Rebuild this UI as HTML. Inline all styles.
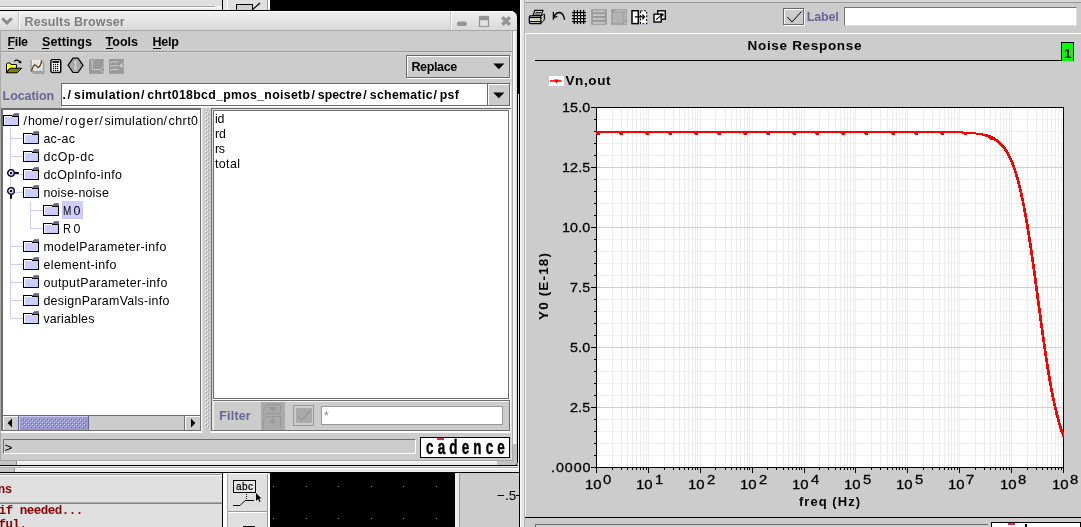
<!DOCTYPE html>
<html><head><meta charset="utf-8"><title>Results Browser</title>
<style>
html,body{margin:0;padding:0;}
body{width:1081px;height:527px;overflow:hidden;position:relative;background:#ccc;font-family:"Liberation Sans",sans-serif;}
#root{position:absolute;left:0;top:0;width:1081px;height:527px;overflow:hidden;will-change:transform;}
#root div,#root span.t,#root svg{position:absolute;}
span.t{white-space:pre;display:block;}
</style></head><body><div id="root">
<div style="left:0px;top:0px;width:222px;height:10px;background:#e0e0e0;"></div>
<div style="left:0px;top:6px;width:215px;height:1px;background:#a8a8a8;"></div>
<div style="left:0px;top:7px;width:215px;height:1px;background:#fcfcfc;"></div>
<div style="left:0px;top:8px;width:215px;height:2px;background:#ececec;"></div>
<div style="left:215px;top:6px;width:1px;height:4px;background:#f8f8f8;"></div>
<div style="left:216px;top:6px;width:1px;height:4px;background:#e0e0e0;"></div>
<div style="left:217px;top:6px;width:5px;height:4px;background:#ececec;"></div>
<div style="left:217px;top:6px;width:5px;height:1px;background:#fcfcfc;"></div>
<div style="left:217px;top:6px;width:1px;height:4px;background:#fcfcfc;"></div>
<div style="left:222px;top:0px;width:1px;height:10px;background:#000000;"></div>
<div style="left:223px;top:0px;width:4px;height:10px;background:#e8e8e8;"></div>
<div style="left:227px;top:0px;width:1px;height:10px;background:#ffffff;"></div>
<div style="left:228px;top:0px;width:39px;height:10px;background:#e0e0e0;"></div>
<div style="left:267px;top:0px;width:1px;height:10px;background:#999999;"></div>
<div style="left:268px;top:0px;width:2px;height:10px;background:#ffffff;"></div>
<div style="left:270px;top:0px;width:250px;height:10px;background:#000000;"></div>
<svg style="left:228px;top:0px" width="40" height="10" viewBox="0 0 40 10" ><rect x="8.5" y="4.5" width="16" height="8" fill="#d0d0d0" stroke="#000"/><path d="M24 10 L32 3" stroke="#000" stroke-width="1.3"/></svg>
<div style="left:0px;top:10px;width:517px;height:1px;background:#000000;"></div>
<div style="left:0px;top:465px;width:519px;height:62px;background:#e0e0e0;"></div>
<div style="left:0px;top:465px;width:519px;height:1px;background:#000000;"></div>
<div style="left:0px;top:466px;width:519px;height:1px;background:#e8e8e8;"></div>
<div style="left:0px;top:467px;width:519px;height:1px;background:#aaaaaa;"></div>
<div style="left:0px;top:468px;width:519px;height:4px;background:#ececec;"></div>
<div style="left:0px;top:468px;width:519px;height:1px;background:#ffffff;"></div>
<div style="left:0px;top:468px;width:14px;height:4px;background:#c4c4c4;"></div>
<div style="left:14px;top:468px;width:1px;height:4px;background:#8a8a8a;"></div>
<div style="left:0px;top:472px;width:519px;height:1px;background:#000000;"></div>
<div style="left:0px;top:473px;width:222px;height:1px;background:#e0e0e0;"></div>
<div style="left:0px;top:474px;width:222px;height:53px;background:#e0e0e0;"></div>
<div style="left:0px;top:474px;width:222px;height:1px;background:#999;"></div>
<div style="left:0px;top:475px;width:222px;height:1px;background:#fafafa;"></div>
<div style="left:0px;top:502px;width:222px;height:1px;background:#a8a8a8;"></div>
<div style="left:0px;top:503px;width:222px;height:1px;background:#858585;"></div>
<span class="t " style="left:-9.30px;top:483.75px;font:bold 12.5px/12.5px 'Liberation Mono',monospace;color:#8b0000;letter-spacing:-0.5px;">ons</span>
<span class="t " style="left:-1.20px;top:504.75px;font:bold 12.5px/12.5px 'Liberation Mono',monospace;color:#8b0000;letter-spacing:-0.5px;">if needed...</span>
<span class="t " style="left:-8.50px;top:518.75px;font:bold 12.5px/12.5px 'Liberation Mono',monospace;color:#8b0000;letter-spacing:-0.5px;">sful.</span>
<div style="left:222px;top:473px;width:1px;height:54px;background:#000000;"></div>
<div style="left:223px;top:473px;width:4px;height:54px;background:#ffffff;"></div>
<div style="left:227px;top:473px;width:1px;height:54px;background:#aaa;"></div>
<div style="left:228px;top:474px;width:39px;height:53px;background:#e0e0e0;"></div>
<div style="left:228px;top:473px;width:39px;height:1px;background:#ffffff;"></div>
<div style="left:228px;top:511px;width:39px;height:1px;background:#999;"></div>
<div style="left:228px;top:512px;width:39px;height:1px;background:#ffffff;"></div>
<div style="left:267px;top:474px;width:1px;height:53px;background:#999;"></div>
<div style="left:268px;top:474px;width:2px;height:53px;background:#ffffff;"></div>
<svg style="left:228px;top:474px" width="40" height="53" viewBox="0 0 40 53" ><rect x="5.5" y="6.5" width="22" height="12" fill="#e8e8e8" stroke="#000"/>
<text x="8" y="16" font-family="Liberation Sans,sans-serif" font-size="10" fill="#000" stroke="#000" stroke-width="0.25" textLength="17">abc</text>
<path d="M18.5 20 V25" stroke="#000" stroke-dasharray="1 1"/>
<path d="M5 31.5 H12 L17 26.5 H26" stroke="#000" fill="none"/>
<path d="M28 19 L28 27 L30 25 L31.5 28 L32.5 27.5 L31.3 24.6 L33.5 24.5 Z" fill="#000"/>
<rect x="15" y="52" width="12" height="1" fill="#000"/></svg>
<div style="left:270px;top:473px;width:185px;height:54px;background:#000000;"></div>
<svg style="left:270px;top:474px" width="185" height="53" viewBox="0 0 185 53" shape-rendering="crispEdges"><rect x="3.0" y="12" width="1" height="1" fill="#8c8cb4"/><rect x="3.0" y="44" width="1" height="1" fill="#8c8cb4"/><rect x="35.5" y="12" width="1" height="1" fill="#8c8cb4"/><rect x="35.5" y="44" width="1" height="1" fill="#8c8cb4"/><rect x="68.0" y="12" width="1" height="1" fill="#8c8cb4"/><rect x="68.0" y="44" width="1" height="1" fill="#8c8cb4"/><rect x="100.5" y="12" width="1" height="1" fill="#8c8cb4"/><rect x="100.5" y="44" width="1" height="1" fill="#8c8cb4"/><rect x="133.0" y="12" width="1" height="1" fill="#8c8cb4"/><rect x="133.0" y="44" width="1" height="1" fill="#8c8cb4"/><rect x="165.5" y="12" width="1" height="1" fill="#8c8cb4"/><rect x="165.5" y="44" width="1" height="1" fill="#8c8cb4"/></svg>
<div style="left:455px;top:473px;width:4px;height:54px;background:#ececec;"></div>
<div style="left:459px;top:473px;width:1px;height:54px;background:#999;"></div>
<div style="left:460px;top:473px;width:59px;height:54px;background:#cccccc;"></div>
<span class="t " style="left:497.00px;top:488.75px;font:13.5px/13.5px 'Liberation Sans',sans-serif;color:#000000;">−.5</span>
<div style="left:516px;top:495px;width:3px;height:1px;background:#000000;"></div>
<div style="left:519px;top:0px;width:1px;height:527px;background:#000000;"></div>
<div style="left:520px;top:0px;width:1px;height:527px;background:#ffffff;"></div>
<div style="left:521px;top:0px;width:3px;height:527px;background:#e6e6e6;"></div>
<div style="left:524px;top:0px;width:1px;height:527px;background:#b4b4b4;"></div>
<div style="left:517px;top:0px;width:3px;height:460px;background:#000000;"></div>
<div style="left:-6px;top:440px;width:524px;height:26px;background:#000;border-radius:5px;"></div>
<div style="left:518px;top:94px;width:1px;height:378px;background:#f4f4f4;"></div>
<div style="left:505px;top:10px;width:14px;height:12px;background:#000000;"></div>
<div style="left:0;top:11px;width:517px;height:20px;background:linear-gradient(#f0f0f0,#e5e5e5 50%,#d7d7d7);border-top-right-radius:6px;"></div>
<div style="left:19px;top:11px;width:494px;height:1px;background:#fafafa;"></div>
<div style="left:0px;top:30px;width:517px;height:1px;background:#a8a8a8;"></div>
<div style="left:18px;top:11px;width:1px;height:19px;background:#c8c8c8;"></div>
<div style="left:19px;top:11px;width:1px;height:19px;background:#f8f8f8;"></div>
<div style="left:450px;top:11px;width:1px;height:19px;background:#c8c8c8;"></div>
<div style="left:451px;top:11px;width:1px;height:19px;background:#f8f8f8;"></div>
<svg style="left:0px;top:10px" width="20" height="21" viewBox="0 0 20 21" ><path d="M2.2 8.2 L7 13 L11.8 8.2" stroke="#8a8a8a" stroke-width="3" fill="none"/></svg>
<span class="t " style="left:24.60px;top:15.75px;font:bold 12.5px/12.5px 'Liberation Sans',sans-serif;color:#7e7e7e;letter-spacing:0.097px;">Results Browser</span>
<svg style="left:452px;top:10px" width="65" height="21" viewBox="0 0 65 21" ><rect x="4.8" y="11.4" width="10.2" height="4.6" rx="2.3" fill="#969696"/>
<rect x="27.5" y="6.5" width="9" height="10" fill="none" stroke="#969696" stroke-width="1.2"/><rect x="27" y="6" width="10" height="4.3" fill="#969696"/>
<path d="M50.3 7.3 L57.7 14.7 M57.7 7.3 L50.3 14.7" stroke="#969696" stroke-width="3.7" stroke-linecap="butt"/></svg>
<div style="left:0px;top:31px;width:517px;height:434px;background:#cccccc;border-bottom-right-radius:4px;"></div>
<div style="left:0px;top:31px;width:1px;height:434px;background:#aaaaaa;"></div>
<div style="left:513px;top:31px;width:4px;height:430px;background:#fff;background:linear-gradient(to right,#fcfcfc,#f0f0f0 50%,#d8d8d8);"></div>
<div style="left:512px;top:31px;width:1px;height:430px;background:#a8a8a8;"></div>
<div style="left:511px;top:31px;width:1px;height:430px;background:#dcdcdc;"></div>
<div style="left:0px;top:461px;width:517px;height:4px;background:#ececec;border-bottom-right-radius:4px;"></div>
<div style="left:0px;top:461px;width:514px;height:1px;background:#ffffff;"></div>
<div style="left:0px;top:461px;width:16px;height:4px;background:#c4c4c4;"></div>
<div style="left:16px;top:461px;width:1px;height:4px;background:#8a8a8a;"></div>
<div style="left:497px;top:461px;width:20px;height:4px;background:#c0c0c0;border-bottom-right-radius:4px;"></div>
<div style="left:513px;top:444px;width:4px;height:19px;background:#c0c0c0;border-bottom-right-radius:4px;"></div>
<div style="left:1px;top:460px;width:512px;height:1px;background:#a6a6a6;"></div>
<span class="t " style="left:7.50px;top:35.75px;font:bold 12.5px/12.5px 'Liberation Sans',sans-serif;color:#000000;letter-spacing:-0.344px;">File</span>
<span class="t " style="left:42.00px;top:35.75px;font:bold 12.5px/12.5px 'Liberation Sans',sans-serif;color:#000000;letter-spacing:0.099px;">Settings</span>
<span class="t " style="left:105.50px;top:35.75px;font:bold 12.5px/12.5px 'Liberation Sans',sans-serif;color:#000000;letter-spacing:0.025px;">Tools</span>
<span class="t " style="left:152.50px;top:35.75px;font:bold 12.5px/12.5px 'Liberation Sans',sans-serif;color:#000000;letter-spacing:-0.195px;">Help</span>
<div style="left:8px;top:48px;width:6px;height:1px;background:#000000;"></div>
<div style="left:42px;top:48px;width:7px;height:1px;background:#000000;"></div>
<div style="left:106px;top:48px;width:7px;height:1px;background:#000000;"></div>
<div style="left:153px;top:48px;width:8px;height:1px;background:#000000;"></div>
<div style="left:1px;top:51px;width:511px;height:1px;background:#999;"></div>
<div style="left:1px;top:52px;width:511px;height:1px;background:#d8d8d8;"></div>
<div style="left:406px;top:55px;width:104px;height:23px;background:#cccccc;box-sizing:border-box;border:1px solid #6a6a6a;"></div>
<div style="left:407px;top:56px;width:102px;height:1px;background:#ffffff;"></div>
<div style="left:407px;top:56px;width:1px;height:21px;background:#ffffff;"></div>
<div style="left:407px;top:78px;width:104px;height:1px;background:#ffffff;"></div>
<div style="left:510px;top:56px;width:1px;height:23px;background:#ffffff;"></div>
<span class="t " style="left:411.40px;top:60.75px;font:bold 12.5px/12.5px 'Liberation Sans',sans-serif;color:#000000;letter-spacing:-0.357px;">Replace</span>
<svg style="left:492px;top:62px" width="14" height="8" viewBox="0 0 14 8" ><path d="M1.2 1.6 H12.4 L6.8 7.3 Z" fill="#000"/></svg>
<span class="t " style="left:2.60px;top:89.75px;font:bold 12.5px/12.5px 'Liberation Sans',sans-serif;color:#666699;letter-spacing:-0.082px;">Location</span>
<div style="left:61px;top:83px;width:449px;height:23px;background:#ffffff;box-sizing:border-box;border:1px solid #6a6a6a;"></div>
<div style="left:488px;top:84px;width:21px;height:21px;background:#cccccc;"></div>
<div style="left:487px;top:84px;width:1px;height:21px;background:#6a6a6a;"></div>
<div style="left:488px;top:84px;width:1px;height:21px;background:#ffffff;"></div>
<div style="left:488px;top:84px;width:21px;height:1px;background:#ffffff;"></div>
<div style="left:62px;top:106px;width:449px;height:1px;background:#ffffff;"></div>
<div style="left:510px;top:84px;width:1px;height:23px;background:#ffffff;"></div>
<div style="left:62px;top:107px;width:449px;height:1px;background:#eeeeee;"></div>
<svg style="left:492px;top:91px" width="14" height="8" viewBox="0 0 14 8" ><path d="M1.2 1.6 H12.4 L6.8 7.3 Z" fill="#000"/></svg>
<span class="t " style="left:62.40px;top:88.85px;font:bold 12.3px/12.3px 'Liberation Sans',sans-serif;color:#000000;letter-spacing:1.666px;">./</span>
<span class="t " style="left:74.10px;top:88.85px;font:bold 12.3px/12.3px 'Liberation Sans',sans-serif;color:#000000;letter-spacing:0.500px;">simulation</span>
<span class="t " style="left:140.90px;top:88.85px;font:bold 12.3px/12.3px 'Liberation Sans',sans-serif;color:#000000;">/</span>
<span class="t " style="left:147.30px;top:88.85px;font:bold 12.3px/12.3px 'Liberation Sans',sans-serif;color:#000000;letter-spacing:0.312px;">chrt018bcd_pmos_noisetb</span>
<span class="t " style="left:311.40px;top:88.85px;font:bold 12.3px/12.3px 'Liberation Sans',sans-serif;color:#000000;">/</span>
<span class="t " style="left:317.80px;top:88.85px;font:bold 12.3px/12.3px 'Liberation Sans',sans-serif;color:#000000;letter-spacing:0.041px;">spectre</span>
<span class="t " style="left:363.20px;top:88.85px;font:bold 12.3px/12.3px 'Liberation Sans',sans-serif;color:#000000;">/</span>
<span class="t " style="left:369.80px;top:88.85px;font:bold 12.3px/12.3px 'Liberation Sans',sans-serif;color:#000000;letter-spacing:0.317px;">schematic</span>
<span class="t " style="left:433.40px;top:88.85px;font:bold 12.3px/12.3px 'Liberation Sans',sans-serif;color:#000000;">/</span>
<span class="t " style="left:439.80px;top:88.85px;font:bold 12.3px/12.3px 'Liberation Sans',sans-serif;color:#000000;letter-spacing:0.276px;">psf</span>
<div style="left:1px;top:108px;width:200px;height:323px;background:#ffffff;box-sizing:border-box;border:2px solid #6e6e6e;border-right:1px solid #6e6e6e;border-bottom:1px solid #6e6e6e"></div>
<div style="left:201px;top:109px;width:1px;height:324px;background:#ffffff;"></div>
<div style="left:1px;top:431px;width:201px;height:1px;background:#ffffff;"></div>
<div style="left:1px;top:432px;width:201px;height:1px;background:#ffffff;"></div>
<div style="left:202px;top:108px;width:1px;height:325px;background:#dcdcdc;"></div>
<div style="left:10px;top:127px;width:1px;height:192px;background:#ccccff;"></div>
<div style="left:11px;top:138px;width:12px;height:1px;background:#ccccff;"></div>
<div style="left:11px;top:156px;width:12px;height:1px;background:#ccccff;"></div>
<div style="left:11px;top:174px;width:12px;height:1px;background:#ccccff;"></div>
<div style="left:11px;top:192px;width:12px;height:1px;background:#ccccff;"></div>
<div style="left:11px;top:246px;width:12px;height:1px;background:#ccccff;"></div>
<div style="left:11px;top:264px;width:12px;height:1px;background:#ccccff;"></div>
<div style="left:11px;top:282px;width:12px;height:1px;background:#ccccff;"></div>
<div style="left:11px;top:300px;width:12px;height:1px;background:#ccccff;"></div>
<div style="left:11px;top:318px;width:12px;height:1px;background:#ccccff;"></div>
<div style="left:30px;top:201px;width:1px;height:28px;background:#ccccff;"></div>
<div style="left:31px;top:210px;width:12px;height:1px;background:#ccccff;"></div>
<div style="left:31px;top:228px;width:12px;height:1px;background:#ccccff;"></div>
<div style="left:62px;top:201px;width:21px;height:18px;background:#ccccff;"></div>
<svg style="left:3px;top:112px" width="17" height="15" viewBox="0 0 17 15" shape-rendering="crispEdges"><rect x="1" y="4" width="14" height="9" fill="#ccccff"/><path d="M0.5 3 V14 M0 13.5 H16 M15.5 4 V14 M0 3.5 H9" stroke="#000" fill="none"/><path d="M1.5 13 V4.5 H9" fill="none" stroke="#fff"/><path d="M9 4 V3 L11 1 H16 V4 Z" fill="#666699"/><path d="M9 4.5 H15" stroke="#000"/><path d="M11 1.5 H16" stroke="#7c7cac"/></svg>
<span class="t " style="left:23.50px;top:114.80px;font:12.4px/12.4px 'Liberation Sans',sans-serif;color:#000000;">/</span>
<span class="t " style="left:28.10px;top:114.80px;font:12.4px/12.4px 'Liberation Sans',sans-serif;color:#000000;letter-spacing:0.095px;">home</span>
<span class="t " style="left:59.70px;top:114.80px;font:12.4px/12.4px 'Liberation Sans',sans-serif;color:#000000;">/</span>
<span class="t " style="left:65.00px;top:114.80px;font:12.4px/12.4px 'Liberation Sans',sans-serif;color:#000000;letter-spacing:1.189px;">roger</span>
<span class="t " style="left:99.30px;top:114.80px;font:12.4px/12.4px 'Liberation Sans',sans-serif;color:#000000;">/</span>
<span class="t " style="left:104.60px;top:114.80px;font:12.4px/12.4px 'Liberation Sans',sans-serif;color:#000000;letter-spacing:0.331px;">simulation</span>
<span class="t " style="left:163.60px;top:114.80px;font:12.4px/12.4px 'Liberation Sans',sans-serif;color:#000000;">/</span>
<span class="t " style="left:168.50px;top:114.80px;font:12.4px/12.4px 'Liberation Sans',sans-serif;color:#000000;letter-spacing:0.484px;">chrt0</span>
<svg style="left:23px;top:130px" width="17" height="15" viewBox="0 0 17 15" shape-rendering="crispEdges"><rect x="1" y="4" width="14" height="9" fill="#ccccff"/><path d="M0.5 3 V14 M0 13.5 H16 M15.5 4 V14 M0 3.5 H9" stroke="#000" fill="none"/><path d="M1.5 13 V4.5 H9" fill="none" stroke="#fff"/><path d="M9 4 V3 L11 1 H16 V4 Z" fill="#666699"/><path d="M9 4.5 H15" stroke="#000"/><path d="M11 1.5 H16" stroke="#7c7cac"/></svg>
<span class="t " style="left:43.40px;top:132.80px;font:12.4px/12.4px 'Liberation Sans',sans-serif;color:#000000;letter-spacing:0.295px;">ac-ac</span>
<svg style="left:23px;top:148px" width="17" height="15" viewBox="0 0 17 15" shape-rendering="crispEdges"><rect x="1" y="4" width="14" height="9" fill="#ccccff"/><path d="M0.5 3 V14 M0 13.5 H16 M15.5 4 V14 M0 3.5 H9" stroke="#000" fill="none"/><path d="M1.5 13 V4.5 H9" fill="none" stroke="#fff"/><path d="M9 4 V3 L11 1 H16 V4 Z" fill="#666699"/><path d="M9 4.5 H15" stroke="#000"/><path d="M11 1.5 H16" stroke="#7c7cac"/></svg>
<span class="t " style="left:43.40px;top:150.80px;font:12.4px/12.4px 'Liberation Sans',sans-serif;color:#000000;letter-spacing:0.607px;">dcOp-dc</span>
<svg style="left:23px;top:166px" width="17" height="15" viewBox="0 0 17 15" shape-rendering="crispEdges"><rect x="1" y="4" width="14" height="9" fill="#ccccff"/><path d="M0.5 3 V14 M0 13.5 H16 M15.5 4 V14 M0 3.5 H9" stroke="#000" fill="none"/><path d="M1.5 13 V4.5 H9" fill="none" stroke="#fff"/><path d="M9 4 V3 L11 1 H16 V4 Z" fill="#666699"/><path d="M9 4.5 H15" stroke="#000"/><path d="M11 1.5 H16" stroke="#7c7cac"/></svg>
<span class="t " style="left:43.40px;top:168.80px;font:12.4px/12.4px 'Liberation Sans',sans-serif;color:#000000;letter-spacing:0.339px;">dcOpInfo-info</span>
<svg style="left:23px;top:184px" width="17" height="15" viewBox="0 0 17 15" shape-rendering="crispEdges"><rect x="1" y="4" width="14" height="9" fill="#ccccff"/><path d="M0.5 3 V14 M0 13.5 H16 M15.5 4 V14 M0 3.5 H9" stroke="#000" fill="none"/><path d="M1.5 13 V4.5 H9" fill="none" stroke="#fff"/><path d="M9 4 V3 L11 1 H16 V4 Z" fill="#666699"/><path d="M9 4.5 H15" stroke="#000"/><path d="M11 1.5 H16" stroke="#7c7cac"/></svg>
<span class="t " style="left:43.40px;top:186.80px;font:12.4px/12.4px 'Liberation Sans',sans-serif;color:#000000;letter-spacing:0.209px;">noise-noise</span>
<svg style="left:43px;top:202px" width="17" height="15" viewBox="0 0 17 15" shape-rendering="crispEdges"><rect x="1" y="4" width="14" height="9" fill="#ccccff"/><path d="M0.5 3 V14 M0 13.5 H16 M15.5 4 V14 M0 3.5 H9" stroke="#000" fill="none"/><path d="M1.5 13 V4.5 H9" fill="none" stroke="#fff"/><path d="M9 4 V3 L11 1 H16 V4 Z" fill="#666699"/><path d="M9 4.5 H15" stroke="#000"/><path d="M11 1.5 H16" stroke="#7c7cac"/></svg>
<span class="t " style="left:63.40px;top:204.80px;font:12.4px/12.4px 'Liberation Sans',sans-serif;color:#000000;transform:scaleX(0.8);transform-origin:0 0;">M</span>
<span class="t " style="left:73.50px;top:204.80px;font:12.4px/12.4px 'Liberation Sans',sans-serif;color:#000000;">0</span>
<svg style="left:43px;top:220px" width="17" height="15" viewBox="0 0 17 15" shape-rendering="crispEdges"><rect x="1" y="4" width="14" height="9" fill="#ccccff"/><path d="M0.5 3 V14 M0 13.5 H16 M15.5 4 V14 M0 3.5 H9" stroke="#000" fill="none"/><path d="M1.5 13 V4.5 H9" fill="none" stroke="#fff"/><path d="M9 4 V3 L11 1 H16 V4 Z" fill="#666699"/><path d="M9 4.5 H15" stroke="#000"/><path d="M11 1.5 H16" stroke="#7c7cac"/></svg>
<span class="t " style="left:63.40px;top:222.80px;font:12.4px/12.4px 'Liberation Sans',sans-serif;color:#000000;transform:scaleX(0.9);transform-origin:0 0;">R</span>
<span class="t " style="left:73.50px;top:222.80px;font:12.4px/12.4px 'Liberation Sans',sans-serif;color:#000000;">0</span>
<svg style="left:23px;top:238px" width="17" height="15" viewBox="0 0 17 15" shape-rendering="crispEdges"><rect x="1" y="4" width="14" height="9" fill="#ccccff"/><path d="M0.5 3 V14 M0 13.5 H16 M15.5 4 V14 M0 3.5 H9" stroke="#000" fill="none"/><path d="M1.5 13 V4.5 H9" fill="none" stroke="#fff"/><path d="M9 4 V3 L11 1 H16 V4 Z" fill="#666699"/><path d="M9 4.5 H15" stroke="#000"/><path d="M11 1.5 H16" stroke="#7c7cac"/></svg>
<span class="t " style="left:43.40px;top:240.80px;font:12.4px/12.4px 'Liberation Sans',sans-serif;color:#000000;letter-spacing:0.401px;">modelParameter-info</span>
<svg style="left:23px;top:256px" width="17" height="15" viewBox="0 0 17 15" shape-rendering="crispEdges"><rect x="1" y="4" width="14" height="9" fill="#ccccff"/><path d="M0.5 3 V14 M0 13.5 H16 M15.5 4 V14 M0 3.5 H9" stroke="#000" fill="none"/><path d="M1.5 13 V4.5 H9" fill="none" stroke="#fff"/><path d="M9 4 V3 L11 1 H16 V4 Z" fill="#666699"/><path d="M9 4.5 H15" stroke="#000"/><path d="M11 1.5 H16" stroke="#7c7cac"/></svg>
<span class="t " style="left:43.40px;top:258.80px;font:12.4px/12.4px 'Liberation Sans',sans-serif;color:#000000;letter-spacing:0.434px;">element-info</span>
<svg style="left:23px;top:274px" width="17" height="15" viewBox="0 0 17 15" shape-rendering="crispEdges"><rect x="1" y="4" width="14" height="9" fill="#ccccff"/><path d="M0.5 3 V14 M0 13.5 H16 M15.5 4 V14 M0 3.5 H9" stroke="#000" fill="none"/><path d="M1.5 13 V4.5 H9" fill="none" stroke="#fff"/><path d="M9 4 V3 L11 1 H16 V4 Z" fill="#666699"/><path d="M9 4.5 H15" stroke="#000"/><path d="M11 1.5 H16" stroke="#7c7cac"/></svg>
<span class="t " style="left:43.40px;top:276.80px;font:12.4px/12.4px 'Liberation Sans',sans-serif;color:#000000;letter-spacing:0.396px;">outputParameter-info</span>
<svg style="left:23px;top:292px" width="17" height="15" viewBox="0 0 17 15" shape-rendering="crispEdges"><rect x="1" y="4" width="14" height="9" fill="#ccccff"/><path d="M0.5 3 V14 M0 13.5 H16 M15.5 4 V14 M0 3.5 H9" stroke="#000" fill="none"/><path d="M1.5 13 V4.5 H9" fill="none" stroke="#fff"/><path d="M9 4 V3 L11 1 H16 V4 Z" fill="#666699"/><path d="M9 4.5 H15" stroke="#000"/><path d="M11 1.5 H16" stroke="#7c7cac"/></svg>
<span class="t " style="left:43.40px;top:294.80px;font:12.4px/12.4px 'Liberation Sans',sans-serif;color:#000000;letter-spacing:0.296px;">designParamVals-info</span>
<svg style="left:23px;top:310px" width="17" height="15" viewBox="0 0 17 15" shape-rendering="crispEdges"><rect x="1" y="4" width="14" height="9" fill="#ccccff"/><path d="M0.5 3 V14 M0 13.5 H16 M15.5 4 V14 M0 3.5 H9" stroke="#000" fill="none"/><path d="M1.5 13 V4.5 H9" fill="none" stroke="#fff"/><path d="M9 4 V3 L11 1 H16 V4 Z" fill="#666699"/><path d="M9 4.5 H15" stroke="#000"/><path d="M11 1.5 H16" stroke="#7c7cac"/></svg>
<span class="t " style="left:43.40px;top:312.80px;font:12.4px/12.4px 'Liberation Sans',sans-serif;color:#000000;letter-spacing:0.172px;">variables</span>
<svg style="left:7px;top:169px" width="13" height="9" viewBox="0 0 13 9" ><circle cx="4" cy="4" r="3.3" fill="#c8c8f4" stroke="#000" stroke-width="1.3"/><circle cx="3.6" cy="3.6" r="1.6" fill="#e8e8ff"/><rect x="3" y="3" width="2" height="2" fill="#000"/><rect x="7.6" y="3" width="4.2" height="2" fill="#000"/></svg>
<svg style="left:7px;top:187px" width="9" height="13" viewBox="0 0 9 13" ><circle cx="4" cy="4" r="3.3" fill="#c8c8f4" stroke="#000" stroke-width="1.3"/><circle cx="3.6" cy="3.6" r="1.6" fill="#e8e8ff"/><rect x="3" y="3" width="2" height="2" fill="#000"/><rect x="3" y="7.6" width="2" height="4.2" fill="#000"/></svg>
<div style="left:3px;top:415px;width:197px;height:1px;background:#6e6e6e;"></div>
<div style="left:3px;top:416px;width:197px;height:14px;background:#cccccc;"></div>
<div style="left:3px;top:416px;width:15px;height:1px;background:#ffffff;"></div>
<div style="left:3px;top:416px;width:1px;height:14px;background:#ffffff;"></div>
<div style="left:18px;top:415px;width:1px;height:15px;background:#666699;"></div>
<div style="left:184px;top:416px;width:1px;height:14px;background:#6e6e6e;"></div>
<div style="left:185px;top:416px;width:1px;height:14px;background:#ffffff;"></div>
<div style="left:185px;top:416px;width:15px;height:1px;background:#ffffff;"></div>
<svg style="left:3px;top:416px" width="15" height="14" viewBox="0 0 15 14" ><path d="M9 2.6 V11.4 L4.6 7 Z" fill="#000"/></svg>
<svg style="left:185px;top:416px" width="15" height="14" viewBox="0 0 15 14" ><path d="M6 2.6 V11.4 L10.4 7 Z" fill="#000"/></svg>
<div style="left:19px;top:415px;width:70px;height:15px;box-sizing:border-box;border-top:1px solid #666699;border-right:1px solid #666699;background:#9999cc;"></div>
<div style="left:19px;top:416px;width:69px;height:1px;background:#ccccff;"></div>
<div style="left:19px;top:416px;width:1px;height:14px;background:#ccccff;"></div>
<svg style="left:22px;top:418px" width="64" height="10" viewBox="0 0 64 10" shape-rendering="crispEdges"><rect x="0" y="0" width="1" height="1" fill="#ccccff"/><rect x="1" y="1" width="1" height="1" fill="#666699"/><rect x="4" y="0" width="1" height="1" fill="#ccccff"/><rect x="5" y="1" width="1" height="1" fill="#666699"/><rect x="8" y="0" width="1" height="1" fill="#ccccff"/><rect x="9" y="1" width="1" height="1" fill="#666699"/><rect x="12" y="0" width="1" height="1" fill="#ccccff"/><rect x="13" y="1" width="1" height="1" fill="#666699"/><rect x="16" y="0" width="1" height="1" fill="#ccccff"/><rect x="17" y="1" width="1" height="1" fill="#666699"/><rect x="20" y="0" width="1" height="1" fill="#ccccff"/><rect x="21" y="1" width="1" height="1" fill="#666699"/><rect x="24" y="0" width="1" height="1" fill="#ccccff"/><rect x="25" y="1" width="1" height="1" fill="#666699"/><rect x="28" y="0" width="1" height="1" fill="#ccccff"/><rect x="29" y="1" width="1" height="1" fill="#666699"/><rect x="32" y="0" width="1" height="1" fill="#ccccff"/><rect x="33" y="1" width="1" height="1" fill="#666699"/><rect x="36" y="0" width="1" height="1" fill="#ccccff"/><rect x="37" y="1" width="1" height="1" fill="#666699"/><rect x="40" y="0" width="1" height="1" fill="#ccccff"/><rect x="41" y="1" width="1" height="1" fill="#666699"/><rect x="44" y="0" width="1" height="1" fill="#ccccff"/><rect x="45" y="1" width="1" height="1" fill="#666699"/><rect x="48" y="0" width="1" height="1" fill="#ccccff"/><rect x="49" y="1" width="1" height="1" fill="#666699"/><rect x="52" y="0" width="1" height="1" fill="#ccccff"/><rect x="53" y="1" width="1" height="1" fill="#666699"/><rect x="56" y="0" width="1" height="1" fill="#ccccff"/><rect x="57" y="1" width="1" height="1" fill="#666699"/><rect x="60" y="0" width="1" height="1" fill="#ccccff"/><rect x="61" y="1" width="1" height="1" fill="#666699"/><rect x="64" y="0" width="1" height="1" fill="#ccccff"/><rect x="65" y="1" width="1" height="1" fill="#666699"/><rect x="2" y="2" width="1" height="1" fill="#ccccff"/><rect x="3" y="3" width="1" height="1" fill="#666699"/><rect x="6" y="2" width="1" height="1" fill="#ccccff"/><rect x="7" y="3" width="1" height="1" fill="#666699"/><rect x="10" y="2" width="1" height="1" fill="#ccccff"/><rect x="11" y="3" width="1" height="1" fill="#666699"/><rect x="14" y="2" width="1" height="1" fill="#ccccff"/><rect x="15" y="3" width="1" height="1" fill="#666699"/><rect x="18" y="2" width="1" height="1" fill="#ccccff"/><rect x="19" y="3" width="1" height="1" fill="#666699"/><rect x="22" y="2" width="1" height="1" fill="#ccccff"/><rect x="23" y="3" width="1" height="1" fill="#666699"/><rect x="26" y="2" width="1" height="1" fill="#ccccff"/><rect x="27" y="3" width="1" height="1" fill="#666699"/><rect x="30" y="2" width="1" height="1" fill="#ccccff"/><rect x="31" y="3" width="1" height="1" fill="#666699"/><rect x="34" y="2" width="1" height="1" fill="#ccccff"/><rect x="35" y="3" width="1" height="1" fill="#666699"/><rect x="38" y="2" width="1" height="1" fill="#ccccff"/><rect x="39" y="3" width="1" height="1" fill="#666699"/><rect x="42" y="2" width="1" height="1" fill="#ccccff"/><rect x="43" y="3" width="1" height="1" fill="#666699"/><rect x="46" y="2" width="1" height="1" fill="#ccccff"/><rect x="47" y="3" width="1" height="1" fill="#666699"/><rect x="50" y="2" width="1" height="1" fill="#ccccff"/><rect x="51" y="3" width="1" height="1" fill="#666699"/><rect x="54" y="2" width="1" height="1" fill="#ccccff"/><rect x="55" y="3" width="1" height="1" fill="#666699"/><rect x="58" y="2" width="1" height="1" fill="#ccccff"/><rect x="59" y="3" width="1" height="1" fill="#666699"/><rect x="62" y="2" width="1" height="1" fill="#ccccff"/><rect x="63" y="3" width="1" height="1" fill="#666699"/><rect x="66" y="2" width="1" height="1" fill="#ccccff"/><rect x="67" y="3" width="1" height="1" fill="#666699"/><rect x="0" y="4" width="1" height="1" fill="#ccccff"/><rect x="1" y="5" width="1" height="1" fill="#666699"/><rect x="4" y="4" width="1" height="1" fill="#ccccff"/><rect x="5" y="5" width="1" height="1" fill="#666699"/><rect x="8" y="4" width="1" height="1" fill="#ccccff"/><rect x="9" y="5" width="1" height="1" fill="#666699"/><rect x="12" y="4" width="1" height="1" fill="#ccccff"/><rect x="13" y="5" width="1" height="1" fill="#666699"/><rect x="16" y="4" width="1" height="1" fill="#ccccff"/><rect x="17" y="5" width="1" height="1" fill="#666699"/><rect x="20" y="4" width="1" height="1" fill="#ccccff"/><rect x="21" y="5" width="1" height="1" fill="#666699"/><rect x="24" y="4" width="1" height="1" fill="#ccccff"/><rect x="25" y="5" width="1" height="1" fill="#666699"/><rect x="28" y="4" width="1" height="1" fill="#ccccff"/><rect x="29" y="5" width="1" height="1" fill="#666699"/><rect x="32" y="4" width="1" height="1" fill="#ccccff"/><rect x="33" y="5" width="1" height="1" fill="#666699"/><rect x="36" y="4" width="1" height="1" fill="#ccccff"/><rect x="37" y="5" width="1" height="1" fill="#666699"/><rect x="40" y="4" width="1" height="1" fill="#ccccff"/><rect x="41" y="5" width="1" height="1" fill="#666699"/><rect x="44" y="4" width="1" height="1" fill="#ccccff"/><rect x="45" y="5" width="1" height="1" fill="#666699"/><rect x="48" y="4" width="1" height="1" fill="#ccccff"/><rect x="49" y="5" width="1" height="1" fill="#666699"/><rect x="52" y="4" width="1" height="1" fill="#ccccff"/><rect x="53" y="5" width="1" height="1" fill="#666699"/><rect x="56" y="4" width="1" height="1" fill="#ccccff"/><rect x="57" y="5" width="1" height="1" fill="#666699"/><rect x="60" y="4" width="1" height="1" fill="#ccccff"/><rect x="61" y="5" width="1" height="1" fill="#666699"/><rect x="64" y="4" width="1" height="1" fill="#ccccff"/><rect x="65" y="5" width="1" height="1" fill="#666699"/><rect x="2" y="6" width="1" height="1" fill="#ccccff"/><rect x="3" y="7" width="1" height="1" fill="#666699"/><rect x="6" y="6" width="1" height="1" fill="#ccccff"/><rect x="7" y="7" width="1" height="1" fill="#666699"/><rect x="10" y="6" width="1" height="1" fill="#ccccff"/><rect x="11" y="7" width="1" height="1" fill="#666699"/><rect x="14" y="6" width="1" height="1" fill="#ccccff"/><rect x="15" y="7" width="1" height="1" fill="#666699"/><rect x="18" y="6" width="1" height="1" fill="#ccccff"/><rect x="19" y="7" width="1" height="1" fill="#666699"/><rect x="22" y="6" width="1" height="1" fill="#ccccff"/><rect x="23" y="7" width="1" height="1" fill="#666699"/><rect x="26" y="6" width="1" height="1" fill="#ccccff"/><rect x="27" y="7" width="1" height="1" fill="#666699"/><rect x="30" y="6" width="1" height="1" fill="#ccccff"/><rect x="31" y="7" width="1" height="1" fill="#666699"/><rect x="34" y="6" width="1" height="1" fill="#ccccff"/><rect x="35" y="7" width="1" height="1" fill="#666699"/><rect x="38" y="6" width="1" height="1" fill="#ccccff"/><rect x="39" y="7" width="1" height="1" fill="#666699"/><rect x="42" y="6" width="1" height="1" fill="#ccccff"/><rect x="43" y="7" width="1" height="1" fill="#666699"/><rect x="46" y="6" width="1" height="1" fill="#ccccff"/><rect x="47" y="7" width="1" height="1" fill="#666699"/><rect x="50" y="6" width="1" height="1" fill="#ccccff"/><rect x="51" y="7" width="1" height="1" fill="#666699"/><rect x="54" y="6" width="1" height="1" fill="#ccccff"/><rect x="55" y="7" width="1" height="1" fill="#666699"/><rect x="58" y="6" width="1" height="1" fill="#ccccff"/><rect x="59" y="7" width="1" height="1" fill="#666699"/><rect x="62" y="6" width="1" height="1" fill="#ccccff"/><rect x="63" y="7" width="1" height="1" fill="#666699"/><rect x="66" y="6" width="1" height="1" fill="#ccccff"/><rect x="67" y="7" width="1" height="1" fill="#666699"/><rect x="0" y="8" width="1" height="1" fill="#ccccff"/><rect x="1" y="9" width="1" height="1" fill="#666699"/><rect x="4" y="8" width="1" height="1" fill="#ccccff"/><rect x="5" y="9" width="1" height="1" fill="#666699"/><rect x="8" y="8" width="1" height="1" fill="#ccccff"/><rect x="9" y="9" width="1" height="1" fill="#666699"/><rect x="12" y="8" width="1" height="1" fill="#ccccff"/><rect x="13" y="9" width="1" height="1" fill="#666699"/><rect x="16" y="8" width="1" height="1" fill="#ccccff"/><rect x="17" y="9" width="1" height="1" fill="#666699"/><rect x="20" y="8" width="1" height="1" fill="#ccccff"/><rect x="21" y="9" width="1" height="1" fill="#666699"/><rect x="24" y="8" width="1" height="1" fill="#ccccff"/><rect x="25" y="9" width="1" height="1" fill="#666699"/><rect x="28" y="8" width="1" height="1" fill="#ccccff"/><rect x="29" y="9" width="1" height="1" fill="#666699"/><rect x="32" y="8" width="1" height="1" fill="#ccccff"/><rect x="33" y="9" width="1" height="1" fill="#666699"/><rect x="36" y="8" width="1" height="1" fill="#ccccff"/><rect x="37" y="9" width="1" height="1" fill="#666699"/><rect x="40" y="8" width="1" height="1" fill="#ccccff"/><rect x="41" y="9" width="1" height="1" fill="#666699"/><rect x="44" y="8" width="1" height="1" fill="#ccccff"/><rect x="45" y="9" width="1" height="1" fill="#666699"/><rect x="48" y="8" width="1" height="1" fill="#ccccff"/><rect x="49" y="9" width="1" height="1" fill="#666699"/><rect x="52" y="8" width="1" height="1" fill="#ccccff"/><rect x="53" y="9" width="1" height="1" fill="#666699"/><rect x="56" y="8" width="1" height="1" fill="#ccccff"/><rect x="57" y="9" width="1" height="1" fill="#666699"/><rect x="60" y="8" width="1" height="1" fill="#ccccff"/><rect x="61" y="9" width="1" height="1" fill="#666699"/><rect x="64" y="8" width="1" height="1" fill="#ccccff"/><rect x="65" y="9" width="1" height="1" fill="#666699"/></svg>
<div style="left:203px;top:108px;width:8px;height:325px;background:#cccccc;"></div>
<svg style="left:205px;top:111px" width="4" height="318" viewBox="0 0 4 318" shape-rendering="crispEdges"><rect x="0" y="0" width="1" height="1" fill="#fff"/><rect x="1" y="1" width="1" height="1" fill="#999"/><rect x="2" y="2" width="1" height="1" fill="#fff"/><rect x="3" y="3" width="1" height="1" fill="#999"/><rect x="0" y="4" width="1" height="1" fill="#fff"/><rect x="1" y="5" width="1" height="1" fill="#999"/><rect x="2" y="6" width="1" height="1" fill="#fff"/><rect x="3" y="7" width="1" height="1" fill="#999"/><rect x="0" y="8" width="1" height="1" fill="#fff"/><rect x="1" y="9" width="1" height="1" fill="#999"/><rect x="2" y="10" width="1" height="1" fill="#fff"/><rect x="3" y="11" width="1" height="1" fill="#999"/><rect x="0" y="12" width="1" height="1" fill="#fff"/><rect x="1" y="13" width="1" height="1" fill="#999"/><rect x="2" y="14" width="1" height="1" fill="#fff"/><rect x="3" y="15" width="1" height="1" fill="#999"/><rect x="0" y="16" width="1" height="1" fill="#fff"/><rect x="1" y="17" width="1" height="1" fill="#999"/><rect x="2" y="18" width="1" height="1" fill="#fff"/><rect x="3" y="19" width="1" height="1" fill="#999"/><rect x="0" y="20" width="1" height="1" fill="#fff"/><rect x="1" y="21" width="1" height="1" fill="#999"/><rect x="2" y="22" width="1" height="1" fill="#fff"/><rect x="3" y="23" width="1" height="1" fill="#999"/><rect x="0" y="24" width="1" height="1" fill="#fff"/><rect x="1" y="25" width="1" height="1" fill="#999"/><rect x="2" y="26" width="1" height="1" fill="#fff"/><rect x="3" y="27" width="1" height="1" fill="#999"/><rect x="0" y="28" width="1" height="1" fill="#fff"/><rect x="1" y="29" width="1" height="1" fill="#999"/><rect x="2" y="30" width="1" height="1" fill="#fff"/><rect x="3" y="31" width="1" height="1" fill="#999"/><rect x="0" y="32" width="1" height="1" fill="#fff"/><rect x="1" y="33" width="1" height="1" fill="#999"/><rect x="2" y="34" width="1" height="1" fill="#fff"/><rect x="3" y="35" width="1" height="1" fill="#999"/><rect x="0" y="36" width="1" height="1" fill="#fff"/><rect x="1" y="37" width="1" height="1" fill="#999"/><rect x="2" y="38" width="1" height="1" fill="#fff"/><rect x="3" y="39" width="1" height="1" fill="#999"/><rect x="0" y="40" width="1" height="1" fill="#fff"/><rect x="1" y="41" width="1" height="1" fill="#999"/><rect x="2" y="42" width="1" height="1" fill="#fff"/><rect x="3" y="43" width="1" height="1" fill="#999"/><rect x="0" y="44" width="1" height="1" fill="#fff"/><rect x="1" y="45" width="1" height="1" fill="#999"/><rect x="2" y="46" width="1" height="1" fill="#fff"/><rect x="3" y="47" width="1" height="1" fill="#999"/><rect x="0" y="48" width="1" height="1" fill="#fff"/><rect x="1" y="49" width="1" height="1" fill="#999"/><rect x="2" y="50" width="1" height="1" fill="#fff"/><rect x="3" y="51" width="1" height="1" fill="#999"/><rect x="0" y="52" width="1" height="1" fill="#fff"/><rect x="1" y="53" width="1" height="1" fill="#999"/><rect x="2" y="54" width="1" height="1" fill="#fff"/><rect x="3" y="55" width="1" height="1" fill="#999"/><rect x="0" y="56" width="1" height="1" fill="#fff"/><rect x="1" y="57" width="1" height="1" fill="#999"/><rect x="2" y="58" width="1" height="1" fill="#fff"/><rect x="3" y="59" width="1" height="1" fill="#999"/><rect x="0" y="60" width="1" height="1" fill="#fff"/><rect x="1" y="61" width="1" height="1" fill="#999"/><rect x="2" y="62" width="1" height="1" fill="#fff"/><rect x="3" y="63" width="1" height="1" fill="#999"/><rect x="0" y="64" width="1" height="1" fill="#fff"/><rect x="1" y="65" width="1" height="1" fill="#999"/><rect x="2" y="66" width="1" height="1" fill="#fff"/><rect x="3" y="67" width="1" height="1" fill="#999"/><rect x="0" y="68" width="1" height="1" fill="#fff"/><rect x="1" y="69" width="1" height="1" fill="#999"/><rect x="2" y="70" width="1" height="1" fill="#fff"/><rect x="3" y="71" width="1" height="1" fill="#999"/><rect x="0" y="72" width="1" height="1" fill="#fff"/><rect x="1" y="73" width="1" height="1" fill="#999"/><rect x="2" y="74" width="1" height="1" fill="#fff"/><rect x="3" y="75" width="1" height="1" fill="#999"/><rect x="0" y="76" width="1" height="1" fill="#fff"/><rect x="1" y="77" width="1" height="1" fill="#999"/><rect x="2" y="78" width="1" height="1" fill="#fff"/><rect x="3" y="79" width="1" height="1" fill="#999"/><rect x="0" y="80" width="1" height="1" fill="#fff"/><rect x="1" y="81" width="1" height="1" fill="#999"/><rect x="2" y="82" width="1" height="1" fill="#fff"/><rect x="3" y="83" width="1" height="1" fill="#999"/><rect x="0" y="84" width="1" height="1" fill="#fff"/><rect x="1" y="85" width="1" height="1" fill="#999"/><rect x="2" y="86" width="1" height="1" fill="#fff"/><rect x="3" y="87" width="1" height="1" fill="#999"/><rect x="0" y="88" width="1" height="1" fill="#fff"/><rect x="1" y="89" width="1" height="1" fill="#999"/><rect x="2" y="90" width="1" height="1" fill="#fff"/><rect x="3" y="91" width="1" height="1" fill="#999"/><rect x="0" y="92" width="1" height="1" fill="#fff"/><rect x="1" y="93" width="1" height="1" fill="#999"/><rect x="2" y="94" width="1" height="1" fill="#fff"/><rect x="3" y="95" width="1" height="1" fill="#999"/><rect x="0" y="96" width="1" height="1" fill="#fff"/><rect x="1" y="97" width="1" height="1" fill="#999"/><rect x="2" y="98" width="1" height="1" fill="#fff"/><rect x="3" y="99" width="1" height="1" fill="#999"/><rect x="0" y="100" width="1" height="1" fill="#fff"/><rect x="1" y="101" width="1" height="1" fill="#999"/><rect x="2" y="102" width="1" height="1" fill="#fff"/><rect x="3" y="103" width="1" height="1" fill="#999"/><rect x="0" y="104" width="1" height="1" fill="#fff"/><rect x="1" y="105" width="1" height="1" fill="#999"/><rect x="2" y="106" width="1" height="1" fill="#fff"/><rect x="3" y="107" width="1" height="1" fill="#999"/><rect x="0" y="108" width="1" height="1" fill="#fff"/><rect x="1" y="109" width="1" height="1" fill="#999"/><rect x="2" y="110" width="1" height="1" fill="#fff"/><rect x="3" y="111" width="1" height="1" fill="#999"/><rect x="0" y="112" width="1" height="1" fill="#fff"/><rect x="1" y="113" width="1" height="1" fill="#999"/><rect x="2" y="114" width="1" height="1" fill="#fff"/><rect x="3" y="115" width="1" height="1" fill="#999"/><rect x="0" y="116" width="1" height="1" fill="#fff"/><rect x="1" y="117" width="1" height="1" fill="#999"/><rect x="2" y="118" width="1" height="1" fill="#fff"/><rect x="3" y="119" width="1" height="1" fill="#999"/><rect x="0" y="120" width="1" height="1" fill="#fff"/><rect x="1" y="121" width="1" height="1" fill="#999"/><rect x="2" y="122" width="1" height="1" fill="#fff"/><rect x="3" y="123" width="1" height="1" fill="#999"/><rect x="0" y="124" width="1" height="1" fill="#fff"/><rect x="1" y="125" width="1" height="1" fill="#999"/><rect x="2" y="126" width="1" height="1" fill="#fff"/><rect x="3" y="127" width="1" height="1" fill="#999"/><rect x="0" y="128" width="1" height="1" fill="#fff"/><rect x="1" y="129" width="1" height="1" fill="#999"/><rect x="2" y="130" width="1" height="1" fill="#fff"/><rect x="3" y="131" width="1" height="1" fill="#999"/><rect x="0" y="132" width="1" height="1" fill="#fff"/><rect x="1" y="133" width="1" height="1" fill="#999"/><rect x="2" y="134" width="1" height="1" fill="#fff"/><rect x="3" y="135" width="1" height="1" fill="#999"/><rect x="0" y="136" width="1" height="1" fill="#fff"/><rect x="1" y="137" width="1" height="1" fill="#999"/><rect x="2" y="138" width="1" height="1" fill="#fff"/><rect x="3" y="139" width="1" height="1" fill="#999"/><rect x="0" y="140" width="1" height="1" fill="#fff"/><rect x="1" y="141" width="1" height="1" fill="#999"/><rect x="2" y="142" width="1" height="1" fill="#fff"/><rect x="3" y="143" width="1" height="1" fill="#999"/><rect x="0" y="144" width="1" height="1" fill="#fff"/><rect x="1" y="145" width="1" height="1" fill="#999"/><rect x="2" y="146" width="1" height="1" fill="#fff"/><rect x="3" y="147" width="1" height="1" fill="#999"/><rect x="0" y="148" width="1" height="1" fill="#fff"/><rect x="1" y="149" width="1" height="1" fill="#999"/><rect x="2" y="150" width="1" height="1" fill="#fff"/><rect x="3" y="151" width="1" height="1" fill="#999"/><rect x="0" y="152" width="1" height="1" fill="#fff"/><rect x="1" y="153" width="1" height="1" fill="#999"/><rect x="2" y="154" width="1" height="1" fill="#fff"/><rect x="3" y="155" width="1" height="1" fill="#999"/><rect x="0" y="156" width="1" height="1" fill="#fff"/><rect x="1" y="157" width="1" height="1" fill="#999"/><rect x="2" y="158" width="1" height="1" fill="#fff"/><rect x="3" y="159" width="1" height="1" fill="#999"/><rect x="0" y="160" width="1" height="1" fill="#fff"/><rect x="1" y="161" width="1" height="1" fill="#999"/><rect x="2" y="162" width="1" height="1" fill="#fff"/><rect x="3" y="163" width="1" height="1" fill="#999"/><rect x="0" y="164" width="1" height="1" fill="#fff"/><rect x="1" y="165" width="1" height="1" fill="#999"/><rect x="2" y="166" width="1" height="1" fill="#fff"/><rect x="3" y="167" width="1" height="1" fill="#999"/><rect x="0" y="168" width="1" height="1" fill="#fff"/><rect x="1" y="169" width="1" height="1" fill="#999"/><rect x="2" y="170" width="1" height="1" fill="#fff"/><rect x="3" y="171" width="1" height="1" fill="#999"/><rect x="0" y="172" width="1" height="1" fill="#fff"/><rect x="1" y="173" width="1" height="1" fill="#999"/><rect x="2" y="174" width="1" height="1" fill="#fff"/><rect x="3" y="175" width="1" height="1" fill="#999"/><rect x="0" y="176" width="1" height="1" fill="#fff"/><rect x="1" y="177" width="1" height="1" fill="#999"/><rect x="2" y="178" width="1" height="1" fill="#fff"/><rect x="3" y="179" width="1" height="1" fill="#999"/><rect x="0" y="180" width="1" height="1" fill="#fff"/><rect x="1" y="181" width="1" height="1" fill="#999"/><rect x="2" y="182" width="1" height="1" fill="#fff"/><rect x="3" y="183" width="1" height="1" fill="#999"/><rect x="0" y="184" width="1" height="1" fill="#fff"/><rect x="1" y="185" width="1" height="1" fill="#999"/><rect x="2" y="186" width="1" height="1" fill="#fff"/><rect x="3" y="187" width="1" height="1" fill="#999"/><rect x="0" y="188" width="1" height="1" fill="#fff"/><rect x="1" y="189" width="1" height="1" fill="#999"/><rect x="2" y="190" width="1" height="1" fill="#fff"/><rect x="3" y="191" width="1" height="1" fill="#999"/><rect x="0" y="192" width="1" height="1" fill="#fff"/><rect x="1" y="193" width="1" height="1" fill="#999"/><rect x="2" y="194" width="1" height="1" fill="#fff"/><rect x="3" y="195" width="1" height="1" fill="#999"/><rect x="0" y="196" width="1" height="1" fill="#fff"/><rect x="1" y="197" width="1" height="1" fill="#999"/><rect x="2" y="198" width="1" height="1" fill="#fff"/><rect x="3" y="199" width="1" height="1" fill="#999"/><rect x="0" y="200" width="1" height="1" fill="#fff"/><rect x="1" y="201" width="1" height="1" fill="#999"/><rect x="2" y="202" width="1" height="1" fill="#fff"/><rect x="3" y="203" width="1" height="1" fill="#999"/><rect x="0" y="204" width="1" height="1" fill="#fff"/><rect x="1" y="205" width="1" height="1" fill="#999"/><rect x="2" y="206" width="1" height="1" fill="#fff"/><rect x="3" y="207" width="1" height="1" fill="#999"/><rect x="0" y="208" width="1" height="1" fill="#fff"/><rect x="1" y="209" width="1" height="1" fill="#999"/><rect x="2" y="210" width="1" height="1" fill="#fff"/><rect x="3" y="211" width="1" height="1" fill="#999"/><rect x="0" y="212" width="1" height="1" fill="#fff"/><rect x="1" y="213" width="1" height="1" fill="#999"/><rect x="2" y="214" width="1" height="1" fill="#fff"/><rect x="3" y="215" width="1" height="1" fill="#999"/><rect x="0" y="216" width="1" height="1" fill="#fff"/><rect x="1" y="217" width="1" height="1" fill="#999"/><rect x="2" y="218" width="1" height="1" fill="#fff"/><rect x="3" y="219" width="1" height="1" fill="#999"/><rect x="0" y="220" width="1" height="1" fill="#fff"/><rect x="1" y="221" width="1" height="1" fill="#999"/><rect x="2" y="222" width="1" height="1" fill="#fff"/><rect x="3" y="223" width="1" height="1" fill="#999"/><rect x="0" y="224" width="1" height="1" fill="#fff"/><rect x="1" y="225" width="1" height="1" fill="#999"/><rect x="2" y="226" width="1" height="1" fill="#fff"/><rect x="3" y="227" width="1" height="1" fill="#999"/><rect x="0" y="228" width="1" height="1" fill="#fff"/><rect x="1" y="229" width="1" height="1" fill="#999"/><rect x="2" y="230" width="1" height="1" fill="#fff"/><rect x="3" y="231" width="1" height="1" fill="#999"/><rect x="0" y="232" width="1" height="1" fill="#fff"/><rect x="1" y="233" width="1" height="1" fill="#999"/><rect x="2" y="234" width="1" height="1" fill="#fff"/><rect x="3" y="235" width="1" height="1" fill="#999"/><rect x="0" y="236" width="1" height="1" fill="#fff"/><rect x="1" y="237" width="1" height="1" fill="#999"/><rect x="2" y="238" width="1" height="1" fill="#fff"/><rect x="3" y="239" width="1" height="1" fill="#999"/><rect x="0" y="240" width="1" height="1" fill="#fff"/><rect x="1" y="241" width="1" height="1" fill="#999"/><rect x="2" y="242" width="1" height="1" fill="#fff"/><rect x="3" y="243" width="1" height="1" fill="#999"/><rect x="0" y="244" width="1" height="1" fill="#fff"/><rect x="1" y="245" width="1" height="1" fill="#999"/><rect x="2" y="246" width="1" height="1" fill="#fff"/><rect x="3" y="247" width="1" height="1" fill="#999"/><rect x="0" y="248" width="1" height="1" fill="#fff"/><rect x="1" y="249" width="1" height="1" fill="#999"/><rect x="2" y="250" width="1" height="1" fill="#fff"/><rect x="3" y="251" width="1" height="1" fill="#999"/><rect x="0" y="252" width="1" height="1" fill="#fff"/><rect x="1" y="253" width="1" height="1" fill="#999"/><rect x="2" y="254" width="1" height="1" fill="#fff"/><rect x="3" y="255" width="1" height="1" fill="#999"/><rect x="0" y="256" width="1" height="1" fill="#fff"/><rect x="1" y="257" width="1" height="1" fill="#999"/><rect x="2" y="258" width="1" height="1" fill="#fff"/><rect x="3" y="259" width="1" height="1" fill="#999"/><rect x="0" y="260" width="1" height="1" fill="#fff"/><rect x="1" y="261" width="1" height="1" fill="#999"/><rect x="2" y="262" width="1" height="1" fill="#fff"/><rect x="3" y="263" width="1" height="1" fill="#999"/><rect x="0" y="264" width="1" height="1" fill="#fff"/><rect x="1" y="265" width="1" height="1" fill="#999"/><rect x="2" y="266" width="1" height="1" fill="#fff"/><rect x="3" y="267" width="1" height="1" fill="#999"/><rect x="0" y="268" width="1" height="1" fill="#fff"/><rect x="1" y="269" width="1" height="1" fill="#999"/><rect x="2" y="270" width="1" height="1" fill="#fff"/><rect x="3" y="271" width="1" height="1" fill="#999"/><rect x="0" y="272" width="1" height="1" fill="#fff"/><rect x="1" y="273" width="1" height="1" fill="#999"/><rect x="2" y="274" width="1" height="1" fill="#fff"/><rect x="3" y="275" width="1" height="1" fill="#999"/><rect x="0" y="276" width="1" height="1" fill="#fff"/><rect x="1" y="277" width="1" height="1" fill="#999"/><rect x="2" y="278" width="1" height="1" fill="#fff"/><rect x="3" y="279" width="1" height="1" fill="#999"/><rect x="0" y="280" width="1" height="1" fill="#fff"/><rect x="1" y="281" width="1" height="1" fill="#999"/><rect x="2" y="282" width="1" height="1" fill="#fff"/><rect x="3" y="283" width="1" height="1" fill="#999"/><rect x="0" y="284" width="1" height="1" fill="#fff"/><rect x="1" y="285" width="1" height="1" fill="#999"/><rect x="2" y="286" width="1" height="1" fill="#fff"/><rect x="3" y="287" width="1" height="1" fill="#999"/><rect x="0" y="288" width="1" height="1" fill="#fff"/><rect x="1" y="289" width="1" height="1" fill="#999"/><rect x="2" y="290" width="1" height="1" fill="#fff"/><rect x="3" y="291" width="1" height="1" fill="#999"/><rect x="0" y="292" width="1" height="1" fill="#fff"/><rect x="1" y="293" width="1" height="1" fill="#999"/><rect x="2" y="294" width="1" height="1" fill="#fff"/><rect x="3" y="295" width="1" height="1" fill="#999"/><rect x="0" y="296" width="1" height="1" fill="#fff"/><rect x="1" y="297" width="1" height="1" fill="#999"/><rect x="2" y="298" width="1" height="1" fill="#fff"/><rect x="3" y="299" width="1" height="1" fill="#999"/><rect x="0" y="300" width="1" height="1" fill="#fff"/><rect x="1" y="301" width="1" height="1" fill="#999"/><rect x="2" y="302" width="1" height="1" fill="#fff"/><rect x="3" y="303" width="1" height="1" fill="#999"/><rect x="0" y="304" width="1" height="1" fill="#fff"/><rect x="1" y="305" width="1" height="1" fill="#999"/><rect x="2" y="306" width="1" height="1" fill="#fff"/><rect x="3" y="307" width="1" height="1" fill="#999"/><rect x="0" y="308" width="1" height="1" fill="#fff"/><rect x="1" y="309" width="1" height="1" fill="#999"/><rect x="2" y="310" width="1" height="1" fill="#fff"/><rect x="3" y="311" width="1" height="1" fill="#999"/><rect x="0" y="312" width="1" height="1" fill="#fff"/><rect x="1" y="313" width="1" height="1" fill="#999"/><rect x="2" y="314" width="1" height="1" fill="#fff"/><rect x="3" y="315" width="1" height="1" fill="#999"/><rect x="0" y="316" width="1" height="1" fill="#fff"/><rect x="1" y="317" width="1" height="1" fill="#999"/><rect x="2" y="318" width="1" height="1" fill="#fff"/><rect x="3" y="319" width="1" height="1" fill="#999"/></svg>
<div style="left:211px;top:108px;width:1px;height:323px;background:#6e6e6e;"></div>
<div style="left:211px;top:108px;width:300px;height:1px;background:#6e6e6e;"></div>
<div style="left:212px;top:109px;width:1px;height:322px;background:#dcdcdc;"></div>
<div style="left:212px;top:109px;width:298px;height:1px;background:#dcdcdc;"></div>
<div style="left:213px;top:110px;width:296px;height:289px;background:#ffffff;box-sizing:border-box;border:1px solid #6e6e6e;border-right:1px solid #6e6e6e;border-bottom:1px solid #6e6e6e"></div>
<div style="left:213px;top:399px;width:297px;height:1px;background:#ffffff;"></div>
<div style="left:509px;top:110px;width:1px;height:321px;background:#ffffff;"></div>
<div style="left:510px;top:109px;width:1px;height:324px;background:#ffffff;"></div>
<span class="t " style="left:215.00px;top:112.80px;font:12.4px/12.4px 'Liberation Sans',sans-serif;color:#000000;letter-spacing:-0.151px;">id</span>
<span class="t " style="left:215.00px;top:127.80px;font:12.4px/12.4px 'Liberation Sans',sans-serif;color:#000000;letter-spacing:-0.024px;">rd</span>
<span class="t " style="left:215.00px;top:142.80px;font:12.4px/12.4px 'Liberation Sans',sans-serif;color:#000000;letter-spacing:-0.329px;">rs</span>
<span class="t " style="left:215.00px;top:157.80px;font:12.4px/12.4px 'Liberation Sans',sans-serif;color:#000000;letter-spacing:0.391px;">total</span>
<div style="left:213px;top:400px;width:297px;height:1px;background:#6e6e6e;"></div>
<div style="left:213px;top:401px;width:1px;height:29px;background:#f0f0f0;"></div>
<div style="left:214px;top:401px;width:295px;height:1px;background:#f4f4f4;"></div>
<div style="left:509px;top:400px;width:1px;height:31px;background:#6e6e6e;"></div>
<div style="left:212px;top:430px;width:298px;height:1px;background:#6e6e6e;"></div>
<div style="left:211px;top:431px;width:300px;height:1px;background:#ffffff;"></div>
<div style="left:211px;top:432px;width:300px;height:1px;background:#ffffff;"></div>
<span class="t " style="left:219.30px;top:409.75px;font:bold 12.5px/12.5px 'Liberation Sans',sans-serif;color:#666699;letter-spacing:0.168px;">Filter</span>
<div style="left:261px;top:402px;width:24px;height:28px;background:#aaa;"></div>
<svg style="left:261px;top:402px" width="24" height="28" viewBox="0 0 24 28" ><path d="M2.5 13 V6.5 L6 2.5 H19.5 V11.5 H6 Z M2.5 27 V18 L6 14.5 H19.5 V26.5" fill="none" stroke="#999"/><path d="M7 5 H17 L12 10 Z" fill="#999"/><path d="M8 19.5 H15 M11.5 16 V23 M9 17 L14 22 M14 17 L9 22" stroke="#999"/></svg>
<div style="left:293px;top:405px;width:21px;height:21px;background:#cccccc;box-sizing:border-box;border:1px solid #999;"></div>
<div style="left:296px;top:408px;width:16px;height:15px;background:#aaa;"></div>
<svg style="left:293px;top:405px" width="21" height="21" viewBox="0 0 21 21" ><path d="M5 11 L8.5 15 L18 5" stroke="#999" fill="none" stroke-width="1.2"/></svg>
<div style="left:321px;top:406px;width:182px;height:19px;background:#ffffff;box-sizing:border-box;border:1px solid #999;"></div>
<span class="t " style="left:324.00px;top:410.00px;font:12px/12px 'Liberation Sans',sans-serif;color:#888;">*</span>
<div style="left:3px;top:439px;width:413px;height:15px;background:#cccccc;box-sizing:border-box;border:1px solid #6e6e6e;border-right-color:#fff;border-bottom-color:#fff"></div>
<span class="t " style="left:4.40px;top:440.75px;font:13.5px/13.5px 'Liberation Sans',sans-serif;color:#000000;">&gt;</span>
<div style="left:420px;top:437px;width:90px;height:21px;background:#ffffff;box-sizing:border-box;border:1.5px solid #000;"></div>
<span class="t" style="left:426px;top:435.6px;font:bold 21px/21px 'Liberation Sans',sans-serif;color:#000;-webkit-text-stroke:0.5px #000;letter-spacing:6.5px;transform:scaleX(0.64);transform-origin:0 0;">cadence</span>
<div style="left:437px;top:438px;width:7px;height:2px;background:#e03040;"></div>
<svg style="left:5px;top:58px" width="19" height="16" viewBox="0 0 19 16" ><defs><pattern id="chk" width="2" height="2" patternUnits="userSpaceOnUse"><rect width="2" height="2" fill="#ffff00"/><rect width="1" height="1" fill="#fff"/><rect x="1" y="1" width="1" height="1" fill="#fff"/></pattern></defs>
<path d="M1.5 14.5 V6 L2.5 5 H5 L6 6.5 H11.5 V10.5 H4.5 Z" fill="url(#chk)" stroke="#000"/>
<path d="M5.2 10.2 H16.8 L12.2 14.8 H1.2 Z" fill="#808000" stroke="#000" stroke-width="1"/>
<path d="M9.2 3.3 Q12 0.6 14.8 4" fill="none" stroke="#000" stroke-width="1.1"/><path d="M13.2 4.6 L16.3 5.6 L16.2 2.4 Z" fill="#000"/></svg>
<svg style="left:30px;top:59px" width="16" height="16" viewBox="0 0 16 16" ><rect x="2.5" y="3" width="12" height="12" fill="#a4a4a4"/><rect x="0.5" y="1" width="12" height="12" fill="#dcdcdc"/><rect x="2" y="1.6" width="1.6" height="1.6" fill="#fff"/><rect x="2" y="4.6" width="1.6" height="1.6" fill="#fff"/><rect x="2" y="7.6" width="1.6" height="1.6" fill="#fff"/><rect x="2" y="10.6" width="1.6" height="1.6" fill="#fff"/><rect x="5" y="1.6" width="1.6" height="1.6" fill="#fff"/><rect x="5" y="4.6" width="1.6" height="1.6" fill="#fff"/><rect x="5" y="7.6" width="1.6" height="1.6" fill="#fff"/><rect x="5" y="10.6" width="1.6" height="1.6" fill="#fff"/><rect x="8" y="1.6" width="1.6" height="1.6" fill="#fff"/><rect x="8" y="4.6" width="1.6" height="1.6" fill="#fff"/><rect x="8" y="7.6" width="1.6" height="1.6" fill="#fff"/><rect x="8" y="10.6" width="1.6" height="1.6" fill="#fff"/><rect x="11" y="1.6" width="1.6" height="1.6" fill="#fff"/><rect x="11" y="4.6" width="1.6" height="1.6" fill="#fff"/><rect x="11" y="7.6" width="1.6" height="1.6" fill="#fff"/><rect x="11" y="10.6" width="1.6" height="1.6" fill="#fff"/><path d="M1 1 V12.5 H12.5" fill="none" stroke="#9a9a9a" stroke-width="1.4"/><path d="M1.6 12 Q3.3 5 5.6 6 Q7.6 9.5 9.5 7.5 Q11 5.5 12 1.2" fill="none" stroke="#5a3a08" stroke-width="1.3"/></svg>
<svg style="left:50px;top:58px" width="14" height="17" viewBox="0 0 14 17" ><rect x="1.6" y="2" width="10.4" height="14" rx="1.5" fill="#b0b0b0"/><rect x="0.9" y="1.6" width="9.8" height="12.8" rx="1.5" fill="#fff" stroke="#000" stroke-width="1.4"/><rect x="2.4" y="3.1" width="6.8" height="1.8" fill="#000"/><rect x="2.90" y="5.90" width="1.25" height="1.25" fill="#000"/><rect x="2.90" y="7.90" width="1.25" height="1.25" fill="#000"/><rect x="2.90" y="9.90" width="1.25" height="1.25" fill="#000"/><rect x="2.90" y="11.90" width="1.25" height="1.25" fill="#000"/><rect x="4.95" y="5.90" width="1.25" height="1.25" fill="#000"/><rect x="4.95" y="7.90" width="1.25" height="1.25" fill="#000"/><rect x="4.95" y="9.90" width="1.25" height="1.25" fill="#000"/><rect x="4.95" y="11.90" width="1.25" height="1.25" fill="#000"/><rect x="7.00" y="5.90" width="1.25" height="1.25" fill="#000"/><rect x="7.00" y="7.90" width="1.25" height="1.25" fill="#000"/><rect x="7.00" y="9.90" width="1.25" height="1.25" fill="#000"/><rect x="7.00" y="11.90" width="1.25" height="1.25" fill="#000"/></svg>
<svg style="left:67px;top:57px" width="18" height="17" viewBox="0 0 18 17" ><path d="M1 8.3 L6 1.2 H11 L16 8.3 L11 15.5 H6 Z" fill="#a8a8a8" stroke="#000" stroke-width="1.2"/><path d="M8.5 3 L6.5 6 H7.7 V10.6 H6.5 L8.5 13.6 L10.5 10.6 H9.3 V6 H10.5 Z" fill="#cfcfcf"/></svg>
<svg style="left:89px;top:59px" width="16" height="16" viewBox="0 0 16 16" ><rect x="0" y="0" width="14.6" height="14.8" fill="#999"/><path d="M1 0.5 L3.2 3 M5.5 0.5 L3.2 3 V10.5 H11 L14 7.5 M11 10.5 L14 13.5" fill="none" stroke="#ccc" stroke-width="1"/></svg>
<svg style="left:109px;top:59px" width="16" height="16" viewBox="0 0 16 16" ><rect x="0" y="0" width="14.8" height="14.8" fill="#999"/><path d="M2 3 H9 M2 6.7 H9 M2 10.5 H9 M1 4.5 L2.5 3 M1 8.2 L2.5 6.7 M1 12 L2.5 10.5" fill="none" stroke="#ccc" stroke-width="1"/><path d="M10 6.5 L13.5 3.8 V9.2 Z" fill="#ccc"/></svg>
<div style="left:525px;top:0px;width:556px;height:527px;background:#cccccc;"></div>
<div style="left:525px;top:0px;width:556px;height:1px;background:#d6d6d6;"></div>
<div style="left:525px;top:1px;width:556px;height:1px;background:#d6d6d6;"></div>
<div style="left:525px;top:2px;width:556px;height:1px;background:#999;"></div>
<div style="left:526px;top:33px;width:555px;height:1px;background:#ffffff;"></div>
<div style="left:525px;top:33px;width:1px;height:484px;background:#f4f4f4;"></div>
<svg style="left:528px;top:9px" width="18" height="16" viewBox="0 0 18 16" ><path d="M5 6.5 L6.8 1.4 H15 L13.2 6.5 Z" fill="#fff" stroke="#000" stroke-width="1.1"/>
<path d="M7.4 3.3 H13.6 M6.5 5 H12.6" stroke="#000" stroke-width="1"/>
<path d="M12.7 7 L16.6 5.2 V10.6 L12.7 14.6 Z" fill="#e4e4e4" stroke="#000" stroke-width="1"/>
<path d="M13.5 9.5 L16 7.5 M13.5 12 L16 9.6" stroke="#000" stroke-width="0.9" stroke-dasharray="1 1"/>
<path d="M2.6 6.9 H12.7 V14.6 H2.6 Q1.3 14.6 1.3 13.4 V8.2 Q1.3 6.9 2.6 6.9 Z" fill="#fff" stroke="#000" stroke-width="1.2"/>
<path d="M1.5 8.6 H12.5 M1.5 12.6 H12.5" stroke="#000" stroke-width="1.1"/>
<rect x="2.2" y="9.8" width="10" height="2" fill="#d8d8d8"/><rect x="7.8" y="10.2" width="3.2" height="1.4" fill="#eee000"/></svg>
<svg style="left:551px;top:10px" width="16" height="12" viewBox="0 0 16 12" ><path d="M2.4 1.8 V9.8" fill="none" stroke="#000" stroke-width="1.3"/><path d="M2.6 7.3 Q4.8 2.6 8.3 2.5 Q12.4 2.6 13.6 9.8" fill="none" stroke="#000" stroke-width="1.3"/><path d="M2.4 7.6 L6.3 6.4" stroke="#000" stroke-width="1.2"/></svg>
<svg style="left:572px;top:10px" width="14" height="14" viewBox="0 0 14 14" ><rect x="2.3" y="2.7" width="9.4" height="9" fill="#fff"/><path d="M2.30 0 V14 M0 2.70 H14" stroke="#000" stroke-width="1.25"/><path d="M5.43 0 V14 M0 5.70 H14" stroke="#000" stroke-width="1.25"/><path d="M8.56 0 V14 M0 8.70 H14" stroke="#000" stroke-width="1.25"/><path d="M11.69 0 V14 M0 11.70 H14" stroke="#000" stroke-width="1.25"/></svg>
<svg style="left:591px;top:9px" width="16" height="16" viewBox="0 0 16 16" ><rect x="0.2" y="0.2" width="15.6" height="15.6" fill="#9a9a9a"/><path d="M2 2.4 H13.8 M2 6.1 H13.8 M2 9.9 H13.8 M2 13.9 H13.8" stroke="#c6c6c6" stroke-width="1.7"/></svg>
<svg style="left:611px;top:9px" width="16" height="16" viewBox="0 0 16 16" ><rect x="0.2" y="0.2" width="15.6" height="15.6" fill="#9a9a9a"/><path d="M4.8 1.4 H14.4 V11" stroke="#bcbcbc" fill="none" stroke-width="1"/><path d="M3.2 2.7 H13 V12.6" stroke="#bcbcbc" fill="none" stroke-width="1"/><rect x="1.7" y="3.8" width="10.2" height="10.4" fill="#b4b4b4" stroke="#a6a6a6" stroke-width="0.8"/><path d="M12 15 L15 12 V15 Z" fill="#b4b4b4"/></svg>
<svg style="left:631px;top:10px" width="17" height="15" viewBox="0 0 17 15" ><rect x="8.6" y="0" width="8" height="14.6" fill="#d6d6f4"/><rect x="1" y="0.7" width="6.3" height="12.9" fill="#fff" stroke="#000" stroke-width="1.5"/><rect x="9.5" y="0.7" width="6.2" height="13.1" fill="#fff" stroke="#000" stroke-width="1.1" stroke-dasharray="2 1.6"/><path d="M3.8 6.9 H13.3 M11.4 4.5 L13.5 6.9 L11.4 9.3" stroke="#000" fill="none" stroke-width="1.2"/></svg>
<svg style="left:653px;top:10px" width="14" height="14" viewBox="0 0 14 14" ><rect x="4.7" y="0.8" width="7.6" height="8.4" fill="#fff" stroke="#000" stroke-width="1.4"/><rect x="1" y="4.2" width="7.2" height="7.8" fill="#fff" stroke="#000" stroke-width="1.4"/><path d="M3 9.6 L9.2 4.6" stroke="#000" fill="none" stroke-width="1.1"/><path d="M7.2 3.6 L10.6 3.4 L10.3 6.8 Z" fill="#000"/></svg>
<div style="left:783px;top:8px;width:21px;height:17px;background:#cccccc;box-sizing:border-box;border:1px solid #6a6a6a;"></div>
<div style="left:784px;top:9px;width:19px;height:1px;background:#ffffff;"></div>
<div style="left:784px;top:9px;width:1px;height:15px;background:#ffffff;"></div>
<div style="left:784px;top:25px;width:21px;height:1px;background:#ffffff;"></div>
<div style="left:804px;top:9px;width:1px;height:17px;background:#ffffff;"></div>
<svg style="left:783px;top:8px" width="22" height="18" viewBox="0 0 22 18" ><path d="M4.5 9 L9 14 L18.5 3.5" stroke="#000" fill="none" stroke-width="1"/></svg>
<span class="t " style="left:806.80px;top:10.75px;font:bold 12.5px/12.5px 'Liberation Sans',sans-serif;color:#666699;letter-spacing:-0.211px;">Label</span>
<div style="left:844px;top:7px;width:233px;height:19px;background:#ffffff;box-sizing:border-box;border:1px solid #777;border-right-color:#ddd;border-bottom-color:#ddd"></div>
<span class="t " style="left:747.50px;top:38.75px;font:bold 13.5px/13.5px 'Liberation Sans',sans-serif;color:#000000;letter-spacing:0.690px;">Noise Response</span>
<div style="left:535px;top:60px;width:527px;height:1px;background:#000000;"></div>
<div style="left:1061px;top:42px;width:13px;height:19px;background:#00ff00;box-sizing:border-box;border:1px solid #000;border-bottom:none"></div>
<span class="t " style="left:1064.00px;top:46.75px;font:bold 13.5px/13.5px 'Liberation Sans',sans-serif;color:#000000;">1</span>
<div style="left:1065px;top:57px;width:6px;height:1px;background:#000000;"></div>
<div style="left:549px;top:76px;width:15px;height:10px;background:#ffffff;"></div>
<svg style="left:549px;top:76px" width="15" height="10" viewBox="0 0 15 10" ><path d="M1 5 H12.5" stroke="#f00" stroke-width="1.6"/><path d="M5 3.6 H10 L7.5 7.4 Z" fill="#f00"/></svg>
<span class="t " style="left:565.50px;top:73.75px;font:bold 13.5px/13.5px 'Liberation Sans',sans-serif;color:#000000;letter-spacing:0.603px;">Vn,out</span>
<svg style="left:0px;top:0px" width="1081" height="527" viewBox="0 0 1081 527" ><rect x="596" y="107" width="467" height="360" fill="#fff"/><g shape-rendering="crispEdges"><path d="M612.5 107 V467" stroke="#ececec"/><path d="M621.5 107 V467" stroke="#ececec"/><path d="M627.5 107 V467" stroke="#ececec"/><path d="M632.5 107 V467" stroke="#ececec"/><path d="M636.5 107 V467" stroke="#ececec"/><path d="M640.5 107 V467" stroke="#ececec"/><path d="M643.5 107 V467" stroke="#ececec"/><path d="M646.5 107 V467" stroke="#ececec"/><path d="M648.5 107 V467" stroke="#ececec"/><path d="M664.5 107 V467" stroke="#ececec"/><path d="M673.5 107 V467" stroke="#ececec"/><path d="M679.5 107 V467" stroke="#ececec"/><path d="M684.5 107 V467" stroke="#ececec"/><path d="M688.5 107 V467" stroke="#ececec"/><path d="M692.5 107 V467" stroke="#ececec"/><path d="M695.5 107 V467" stroke="#ececec"/><path d="M697.5 107 V467" stroke="#ececec"/><path d="M700.5 107 V467" stroke="#ececec"/><path d="M715.5 107 V467" stroke="#ececec"/><path d="M725.5 107 V467" stroke="#ececec"/><path d="M731.5 107 V467" stroke="#ececec"/><path d="M736.5 107 V467" stroke="#ececec"/><path d="M740.5 107 V467" stroke="#ececec"/><path d="M744.5 107 V467" stroke="#ececec"/><path d="M747.5 107 V467" stroke="#ececec"/><path d="M749.5 107 V467" stroke="#ececec"/><path d="M752.5 107 V467" stroke="#ececec"/><path d="M767.5 107 V467" stroke="#ececec"/><path d="M776.5 107 V467" stroke="#ececec"/><path d="M783.5 107 V467" stroke="#ececec"/><path d="M788.5 107 V467" stroke="#ececec"/><path d="M792.5 107 V467" stroke="#ececec"/><path d="M796.5 107 V467" stroke="#ececec"/><path d="M799.5 107 V467" stroke="#ececec"/><path d="M801.5 107 V467" stroke="#ececec"/><path d="M804.5 107 V467" stroke="#ececec"/><path d="M819.5 107 V467" stroke="#ececec"/><path d="M828.5 107 V467" stroke="#ececec"/><path d="M835.5 107 V467" stroke="#ececec"/><path d="M840.5 107 V467" stroke="#ececec"/><path d="M844.5 107 V467" stroke="#ececec"/><path d="M847.5 107 V467" stroke="#ececec"/><path d="M850.5 107 V467" stroke="#ececec"/><path d="M853.5 107 V467" stroke="#ececec"/><path d="M855.5 107 V467" stroke="#ececec"/><path d="M871.5 107 V467" stroke="#ececec"/><path d="M880.5 107 V467" stroke="#ececec"/><path d="M887.5 107 V467" stroke="#ececec"/><path d="M892.5 107 V467" stroke="#ececec"/><path d="M896.5 107 V467" stroke="#ececec"/><path d="M899.5 107 V467" stroke="#ececec"/><path d="M902.5 107 V467" stroke="#ececec"/><path d="M905.5 107 V467" stroke="#ececec"/><path d="M907.5 107 V467" stroke="#ececec"/><path d="M923.5 107 V467" stroke="#ececec"/><path d="M932.5 107 V467" stroke="#ececec"/><path d="M939.5 107 V467" stroke="#ececec"/><path d="M944.5 107 V467" stroke="#ececec"/><path d="M948.5 107 V467" stroke="#ececec"/><path d="M951.5 107 V467" stroke="#ececec"/><path d="M954.5 107 V467" stroke="#ececec"/><path d="M957.5 107 V467" stroke="#ececec"/><path d="M959.5 107 V467" stroke="#ececec"/><path d="M975.5 107 V467" stroke="#ececec"/><path d="M984.5 107 V467" stroke="#ececec"/><path d="M990.5 107 V467" stroke="#ececec"/><path d="M995.5 107 V467" stroke="#ececec"/><path d="M1000.5 107 V467" stroke="#ececec"/><path d="M1003.5 107 V467" stroke="#ececec"/><path d="M1006.5 107 V467" stroke="#ececec"/><path d="M1009.5 107 V467" stroke="#ececec"/><path d="M1011.5 107 V467" stroke="#ececec"/><path d="M1027.5 107 V467" stroke="#ececec"/><path d="M1036.5 107 V467" stroke="#ececec"/><path d="M1042.5 107 V467" stroke="#ececec"/><path d="M1047.5 107 V467" stroke="#ececec"/><path d="M1051.5 107 V467" stroke="#ececec"/><path d="M1055.5 107 V467" stroke="#ececec"/><path d="M1058.5 107 V467" stroke="#ececec"/><path d="M1061.5 107 V467" stroke="#ececec"/><path d="M596 119.5 H1063" stroke="#f0f0f0"/><path d="M596 131.5 H1063" stroke="#f0f0f0"/><path d="M596 143.5 H1063" stroke="#f0f0f0"/><path d="M596 155.5 H1063" stroke="#f0f0f0"/><path d="M596 167.5 H1063" stroke="#d0d0d0"/><path d="M596 179.5 H1063" stroke="#f0f0f0"/><path d="M596 191.5 H1063" stroke="#f0f0f0"/><path d="M596 203.5 H1063" stroke="#f0f0f0"/><path d="M596 215.5 H1063" stroke="#f0f0f0"/><path d="M596 227.5 H1063" stroke="#d0d0d0"/><path d="M596 239.5 H1063" stroke="#f0f0f0"/><path d="M596 251.5 H1063" stroke="#f0f0f0"/><path d="M596 263.5 H1063" stroke="#f0f0f0"/><path d="M596 275.5 H1063" stroke="#f0f0f0"/><path d="M596 287.5 H1063" stroke="#d0d0d0"/><path d="M596 299.5 H1063" stroke="#f0f0f0"/><path d="M596 311.5 H1063" stroke="#f0f0f0"/><path d="M596 323.5 H1063" stroke="#f0f0f0"/><path d="M596 335.5 H1063" stroke="#f0f0f0"/><path d="M596 347.5 H1063" stroke="#d0d0d0"/><path d="M596 359.5 H1063" stroke="#f0f0f0"/><path d="M596 371.5 H1063" stroke="#f0f0f0"/><path d="M596 383.5 H1063" stroke="#f0f0f0"/><path d="M596 395.5 H1063" stroke="#f0f0f0"/><path d="M596 407.5 H1063" stroke="#d0d0d0"/><path d="M596 419.5 H1063" stroke="#f0f0f0"/><path d="M596 431.5 H1063" stroke="#f0f0f0"/><path d="M596 443.5 H1063" stroke="#f0f0f0"/><path d="M596 455.5 H1063" stroke="#f0f0f0"/></g><g shape-rendering="crispEdges"><path d="M596.5 107 V468 M596 107.5 H1064 M1063.5 107 V468 M596 467.5 H1064" stroke="#000" fill="none"/><path d="M591 107.5 H596" stroke="#000"/><path d="M594 119.5 H596" stroke="#000"/><path d="M594 131.5 H596" stroke="#000"/><path d="M594 143.5 H596" stroke="#000"/><path d="M594 155.5 H596" stroke="#000"/><path d="M591 167.5 H596" stroke="#000"/><path d="M594 179.5 H596" stroke="#000"/><path d="M594 191.5 H596" stroke="#000"/><path d="M594 203.5 H596" stroke="#000"/><path d="M594 215.5 H596" stroke="#000"/><path d="M591 227.5 H596" stroke="#000"/><path d="M594 239.5 H596" stroke="#000"/><path d="M594 251.5 H596" stroke="#000"/><path d="M594 263.5 H596" stroke="#000"/><path d="M594 275.5 H596" stroke="#000"/><path d="M591 287.5 H596" stroke="#000"/><path d="M594 299.5 H596" stroke="#000"/><path d="M594 311.5 H596" stroke="#000"/><path d="M594 323.5 H596" stroke="#000"/><path d="M594 335.5 H596" stroke="#000"/><path d="M591 347.5 H596" stroke="#000"/><path d="M594 359.5 H596" stroke="#000"/><path d="M594 371.5 H596" stroke="#000"/><path d="M594 383.5 H596" stroke="#000"/><path d="M594 395.5 H596" stroke="#000"/><path d="M591 407.5 H596" stroke="#000"/><path d="M594 419.5 H596" stroke="#000"/><path d="M594 431.5 H596" stroke="#000"/><path d="M594 443.5 H596" stroke="#000"/><path d="M594 455.5 H596" stroke="#000"/><path d="M591 467.5 H596" stroke="#000"/><path d="M596.5 467 V473" stroke="#000"/><path d="M612.5 467 V470" stroke="#000"/><path d="M621.5 467 V470" stroke="#000"/><path d="M627.5 467 V470" stroke="#000"/><path d="M632.5 467 V470" stroke="#000"/><path d="M636.5 467 V470" stroke="#000"/><path d="M640.5 467 V470" stroke="#000"/><path d="M643.5 467 V470" stroke="#000"/><path d="M646.5 467 V470" stroke="#000"/><path d="M648.5 467 V473" stroke="#000"/><path d="M664.5 467 V470" stroke="#000"/><path d="M673.5 467 V470" stroke="#000"/><path d="M679.5 467 V470" stroke="#000"/><path d="M684.5 467 V470" stroke="#000"/><path d="M688.5 467 V470" stroke="#000"/><path d="M692.5 467 V470" stroke="#000"/><path d="M695.5 467 V470" stroke="#000"/><path d="M697.5 467 V470" stroke="#000"/><path d="M700.5 467 V473" stroke="#000"/><path d="M715.5 467 V470" stroke="#000"/><path d="M725.5 467 V470" stroke="#000"/><path d="M731.5 467 V470" stroke="#000"/><path d="M736.5 467 V470" stroke="#000"/><path d="M740.5 467 V470" stroke="#000"/><path d="M744.5 467 V470" stroke="#000"/><path d="M747.5 467 V470" stroke="#000"/><path d="M749.5 467 V470" stroke="#000"/><path d="M752.5 467 V473" stroke="#000"/><path d="M767.5 467 V470" stroke="#000"/><path d="M776.5 467 V470" stroke="#000"/><path d="M783.5 467 V470" stroke="#000"/><path d="M788.5 467 V470" stroke="#000"/><path d="M792.5 467 V470" stroke="#000"/><path d="M796.5 467 V470" stroke="#000"/><path d="M799.5 467 V470" stroke="#000"/><path d="M801.5 467 V470" stroke="#000"/><path d="M804.5 467 V473" stroke="#000"/><path d="M819.5 467 V470" stroke="#000"/><path d="M828.5 467 V470" stroke="#000"/><path d="M835.5 467 V470" stroke="#000"/><path d="M840.5 467 V470" stroke="#000"/><path d="M844.5 467 V470" stroke="#000"/><path d="M847.5 467 V470" stroke="#000"/><path d="M850.5 467 V470" stroke="#000"/><path d="M853.5 467 V470" stroke="#000"/><path d="M855.5 467 V473" stroke="#000"/><path d="M871.5 467 V470" stroke="#000"/><path d="M880.5 467 V470" stroke="#000"/><path d="M887.5 467 V470" stroke="#000"/><path d="M892.5 467 V470" stroke="#000"/><path d="M896.5 467 V470" stroke="#000"/><path d="M899.5 467 V470" stroke="#000"/><path d="M902.5 467 V470" stroke="#000"/><path d="M905.5 467 V470" stroke="#000"/><path d="M907.5 467 V473" stroke="#000"/><path d="M923.5 467 V470" stroke="#000"/><path d="M932.5 467 V470" stroke="#000"/><path d="M939.5 467 V470" stroke="#000"/><path d="M944.5 467 V470" stroke="#000"/><path d="M948.5 467 V470" stroke="#000"/><path d="M951.5 467 V470" stroke="#000"/><path d="M954.5 467 V470" stroke="#000"/><path d="M957.5 467 V470" stroke="#000"/><path d="M959.5 467 V473" stroke="#000"/><path d="M975.5 467 V470" stroke="#000"/><path d="M984.5 467 V470" stroke="#000"/><path d="M990.5 467 V470" stroke="#000"/><path d="M995.5 467 V470" stroke="#000"/><path d="M1000.5 467 V470" stroke="#000"/><path d="M1003.5 467 V470" stroke="#000"/><path d="M1006.5 467 V470" stroke="#000"/><path d="M1009.5 467 V470" stroke="#000"/><path d="M1011.5 467 V473" stroke="#000"/><path d="M1027.5 467 V470" stroke="#000"/><path d="M1036.5 467 V470" stroke="#000"/><path d="M1042.5 467 V470" stroke="#000"/><path d="M1047.5 467 V470" stroke="#000"/><path d="M1051.5 467 V470" stroke="#000"/><path d="M1055.5 467 V470" stroke="#000"/><path d="M1058.5 467 V470" stroke="#000"/><path d="M1061.5 467 V470" stroke="#000"/><path d="M1063.5 467 V473" stroke="#000"/></g><clipPath id="cp"><rect x="596" y="107" width="468" height="360"/></clipPath><g clip-path="url(#cp)" shape-rendering="crispEdges"><path d="M596.0 132.10 L597.0 132.10 L598.0 132.10 L599.0 132.10 L600.0 132.10 L601.0 132.10 L602.0 132.10 L603.0 132.10 L604.0 132.10 L605.0 132.10 L606.0 132.10 L607.0 132.10 L608.0 132.10 L609.0 132.10 L610.0 132.10 L611.0 132.10 L612.0 132.10 L613.0 132.10 L614.0 132.10 L615.0 132.10 L616.0 132.10 L617.0 132.10 L618.0 132.10 L619.0 132.10 L620.0 132.10 L621.0 132.10 L622.0 132.10 L623.0 132.10 L624.0 132.10 L625.0 132.10 L626.0 132.10 L627.0 132.10 L628.0 132.10 L629.0 132.10 L630.0 132.10 L631.0 132.10 L632.0 132.10 L633.0 132.10 L634.0 132.10 L635.0 132.10 L636.0 132.10 L637.0 132.10 L638.0 132.10 L639.0 132.10 L640.0 132.10 L641.0 132.10 L642.0 132.10 L643.0 132.10 L644.0 132.10 L645.0 132.10 L646.0 132.10 L647.0 132.10 L648.0 132.10 L649.0 132.10 L650.0 132.10 L651.0 132.10 L652.0 132.10 L653.0 132.10 L654.0 132.10 L655.0 132.10 L656.0 132.10 L657.0 132.10 L658.0 132.10 L659.0 132.10 L660.0 132.10 L661.0 132.10 L662.0 132.10 L663.0 132.10 L664.0 132.10 L665.0 132.10 L666.0 132.10 L667.0 132.10 L668.0 132.10 L669.0 132.10 L670.0 132.10 L671.0 132.10 L672.0 132.10 L673.0 132.10 L674.0 132.10 L675.0 132.10 L676.0 132.10 L677.0 132.10 L678.0 132.10 L679.0 132.10 L680.0 132.10 L681.0 132.10 L682.0 132.10 L683.0 132.10 L684.0 132.10 L685.0 132.10 L686.0 132.10 L687.0 132.10 L688.0 132.10 L689.0 132.10 L690.0 132.10 L691.0 132.10 L692.0 132.10 L693.0 132.10 L694.0 132.10 L695.0 132.10 L696.0 132.10 L697.0 132.10 L698.0 132.10 L699.0 132.10 L700.0 132.10 L701.0 132.10 L702.0 132.10 L703.0 132.10 L704.0 132.10 L705.0 132.10 L706.0 132.10 L707.0 132.10 L708.0 132.10 L709.0 132.10 L710.0 132.10 L711.0 132.10 L712.0 132.10 L713.0 132.10 L714.0 132.10 L715.0 132.10 L716.0 132.10 L717.0 132.10 L718.0 132.10 L719.0 132.10 L720.0 132.10 L721.0 132.10 L722.0 132.10 L723.0 132.10 L724.0 132.10 L725.0 132.10 L726.0 132.10 L727.0 132.10 L728.0 132.10 L729.0 132.10 L730.0 132.10 L731.0 132.10 L732.0 132.10 L733.0 132.10 L734.0 132.10 L735.0 132.10 L736.0 132.10 L737.0 132.10 L738.0 132.10 L739.0 132.10 L740.0 132.10 L741.0 132.10 L742.0 132.10 L743.0 132.10 L744.0 132.10 L745.0 132.10 L746.0 132.10 L747.0 132.10 L748.0 132.10 L749.0 132.10 L750.0 132.10 L751.0 132.10 L752.0 132.10 L753.0 132.10 L754.0 132.10 L755.0 132.10 L756.0 132.10 L757.0 132.10 L758.0 132.10 L759.0 132.10 L760.0 132.10 L761.0 132.10 L762.0 132.10 L763.0 132.10 L764.0 132.10 L765.0 132.10 L766.0 132.10 L767.0 132.10 L768.0 132.10 L769.0 132.10 L770.0 132.10 L771.0 132.10 L772.0 132.10 L773.0 132.10 L774.0 132.10 L775.0 132.10 L776.0 132.10 L777.0 132.10 L778.0 132.10 L779.0 132.10 L780.0 132.10 L781.0 132.10 L782.0 132.10 L783.0 132.10 L784.0 132.10 L785.0 132.10 L786.0 132.10 L787.0 132.10 L788.0 132.10 L789.0 132.10 L790.0 132.10 L791.0 132.10 L792.0 132.10 L793.0 132.10 L794.0 132.10 L795.0 132.10 L796.0 132.10 L797.0 132.10 L798.0 132.10 L799.0 132.10 L800.0 132.10 L801.0 132.10 L802.0 132.10 L803.0 132.10 L804.0 132.10 L805.0 132.10 L806.0 132.10 L807.0 132.10 L808.0 132.10 L809.0 132.10 L810.0 132.10 L811.0 132.10 L812.0 132.10 L813.0 132.10 L814.0 132.10 L815.0 132.10 L816.0 132.10 L817.0 132.10 L818.0 132.10 L819.0 132.10 L820.0 132.10 L821.0 132.10 L822.0 132.10 L823.0 132.10 L824.0 132.10 L825.0 132.10 L826.0 132.10 L827.0 132.10 L828.0 132.10 L829.0 132.10 L830.0 132.10 L831.0 132.10 L832.0 132.10 L833.0 132.10 L834.0 132.10 L835.0 132.10 L836.0 132.10 L837.0 132.10 L838.0 132.10 L839.0 132.10 L840.0 132.10 L841.0 132.10 L842.0 132.10 L843.0 132.10 L844.0 132.10 L845.0 132.10 L846.0 132.10 L847.0 132.10 L848.0 132.10 L849.0 132.10 L850.0 132.10 L851.0 132.10 L852.0 132.10 L853.0 132.10 L854.0 132.10 L855.0 132.10 L856.0 132.10 L857.0 132.10 L858.0 132.10 L859.0 132.10 L860.0 132.10 L861.0 132.10 L862.0 132.10 L863.0 132.10 L864.0 132.10 L865.0 132.10 L866.0 132.10 L867.0 132.10 L868.0 132.10 L869.0 132.10 L870.0 132.10 L871.0 132.10 L872.0 132.10 L873.0 132.10 L874.0 132.10 L875.0 132.10 L876.0 132.10 L877.0 132.10 L878.0 132.10 L879.0 132.10 L880.0 132.10 L881.0 132.10 L882.0 132.10 L883.0 132.10 L884.0 132.10 L885.0 132.10 L886.0 132.10 L887.0 132.10 L888.0 132.10 L889.0 132.10 L890.0 132.10 L891.0 132.10 L892.0 132.10 L893.0 132.10 L894.0 132.10 L895.0 132.10 L896.0 132.10 L897.0 132.10 L898.0 132.10 L899.0 132.10 L900.0 132.10 L901.0 132.10 L902.0 132.10 L903.0 132.10 L904.0 132.10 L905.0 132.10 L906.0 132.10 L907.0 132.10 L908.0 132.10 L909.0 132.10 L910.0 132.10 L911.0 132.10 L912.0 132.10 L913.0 132.11 L914.0 132.11 L915.0 132.11 L916.0 132.11 L917.0 132.11 L918.0 132.11 L919.0 132.11 L920.0 132.11 L921.0 132.11 L922.0 132.11 L923.0 132.11 L924.0 132.11 L925.0 132.11 L926.0 132.12 L927.0 132.12 L928.0 132.12 L929.0 132.12 L930.0 132.12 L931.0 132.13 L932.0 132.13 L933.0 132.13 L934.0 132.13 L935.0 132.14 L936.0 132.14 L937.0 132.14 L938.0 132.15 L939.0 132.15 L940.0 132.16 L941.0 132.16 L942.0 132.17 L943.0 132.17 L944.0 132.18 L945.0 132.19 L946.0 132.20 L947.0 132.20 L948.0 132.21 L949.0 132.22 L950.0 132.24 L951.0 132.25 L952.0 132.26 L953.0 132.28 L954.0 132.29 L955.0 132.31 L956.0 132.33 L957.0 132.35 L958.0 132.38 L959.0 132.40 L960.0 132.43 L961.0 132.46 L962.0 132.49 L963.0 132.53 L964.0 132.57 L965.0 132.61 L966.0 132.66 L967.0 132.71 L968.0 132.77 L969.0 132.83 L970.0 132.90 L971.0 132.97 L972.0 133.05 L973.0 133.14 L974.0 133.24 L975.0 133.34 L976.0 133.46 L977.0 133.58 L978.0 133.72 L979.0 133.87 L980.0 134.03 L981.0 134.21 L982.0 134.40 L983.0 134.62 L984.0 134.85 L985.0 135.10" stroke="#ff0000" stroke-width="2" fill="none"/><path d="M985.0 135.10 L986.0 135.38 L987.0 135.68 L988.0 136.01 L989.0 136.36 L990.0 136.75 L991.0 137.18 L992.0 137.64 L993.0 138.15 L994.0 138.70 L995.0 139.30 L996.0 139.95 L997.0 140.66 L998.0 141.43 L999.0 142.27 L1000.0 143.18 L1001.0 144.18 L1002.0 145.25 L1003.0 146.42 L1004.0 147.69 L1005.0 149.06 L1006.0 150.55 L1007.0 152.16 L1008.0 153.90 L1009.0 155.78 L1010.0 157.81 L1011.0 160.00 L1012.0 162.35 L1013.0 164.88 L1014.0 167.61 L1015.0 170.52 L1016.0 173.65 L1017.0 176.99 L1018.0 180.55 L1019.0 184.35 L1020.0 188.38 L1021.0 192.66 L1022.0 197.19 L1023.0 201.97 L1024.0 207.01 L1025.0 212.30 L1026.0 217.84 L1027.0 223.63 L1028.0 229.65 L1029.0 235.90 L1030.0 242.37 L1031.0 249.03 L1032.0 255.88 L1033.0 262.89 L1034.0 270.04 L1035.0 277.30 L1036.0 284.64 L1037.0 292.05 L1038.0 299.48 L1039.0 306.92 L1040.0 314.33 L1041.0 321.68 L1042.0 328.95 L1043.0 336.11 L1044.0 343.13 L1045.0 349.99 L1046.0 356.67 L1047.0 363.16 L1048.0 369.43 L1049.0 375.47 L1050.0 381.28 L1051.0 386.84 L1052.0 392.15 L1053.0 397.21 L1054.0 402.01 L1055.0 406.56 L1056.0 410.86 L1057.0 414.92 L1058.0 418.74 L1059.0 422.32 L1060.0 425.68 L1061.0 428.82 L1062.0 431.75 L1063.0 434.49 L1064.0 437.04" stroke="#ff0000" stroke-width="2.7" fill="none" stroke-linejoin="round"/><rect x="596" y="133" width="4" height="1" fill="#f00"/><rect x="597" y="134" width="3" height="1" fill="#f00"/><rect x="619" y="133" width="4" height="1" fill="#f00"/><rect x="620" y="134" width="3" height="1" fill="#f00"/><rect x="645" y="133" width="4" height="1" fill="#f00"/><rect x="646" y="134" width="3" height="1" fill="#f00"/><rect x="668" y="133" width="4" height="1" fill="#f00"/><rect x="669" y="134" width="3" height="1" fill="#f00"/><rect x="694" y="133" width="4" height="1" fill="#f00"/><rect x="695" y="134" width="3" height="1" fill="#f00"/><rect x="717" y="133" width="4" height="1" fill="#f00"/><rect x="718" y="134" width="3" height="1" fill="#f00"/><rect x="743" y="133" width="4" height="1" fill="#f00"/><rect x="744" y="134" width="3" height="1" fill="#f00"/><rect x="766" y="133" width="4" height="1" fill="#f00"/><rect x="767" y="134" width="3" height="1" fill="#f00"/><rect x="792" y="133" width="4" height="1" fill="#f00"/><rect x="793" y="134" width="3" height="1" fill="#f00"/><rect x="815" y="133" width="4" height="1" fill="#f00"/><rect x="816" y="134" width="3" height="1" fill="#f00"/><rect x="841" y="133" width="4" height="1" fill="#f00"/><rect x="842" y="134" width="3" height="1" fill="#f00"/><rect x="864" y="133" width="4" height="1" fill="#f00"/><rect x="865" y="134" width="3" height="1" fill="#f00"/><rect x="891" y="133" width="4" height="1" fill="#f00"/><rect x="892" y="134" width="3" height="1" fill="#f00"/><rect x="914" y="133" width="4" height="1" fill="#f00"/><rect x="915" y="134" width="3" height="1" fill="#f00"/><rect x="940" y="133" width="4" height="1" fill="#f00"/><rect x="941" y="134" width="3" height="1" fill="#f00"/><rect x="963" y="133" width="4" height="1" fill="#f00"/><rect x="964" y="134" width="3" height="1" fill="#f00"/><rect x="989" y="138" width="4" height="1" fill="#f00"/><rect x="990" y="139" width="3" height="1" fill="#f00"/></g></svg>
<span class="t " style="left:562.40px;top:100.75px;font:13.5px/13.5px 'Liberation Sans',sans-serif;color:#000000;letter-spacing:0.111px;-webkit-text-stroke:0.3px #000;transform:scaleX(1.06);transform-origin:0 0;">15.0</span>
<span class="t " style="left:562.40px;top:160.75px;font:13.5px/13.5px 'Liberation Sans',sans-serif;color:#000000;letter-spacing:0.111px;-webkit-text-stroke:0.3px #000;transform:scaleX(1.06);transform-origin:0 0;">12.5</span>
<span class="t " style="left:562.40px;top:220.75px;font:13.5px/13.5px 'Liberation Sans',sans-serif;color:#000000;letter-spacing:0.111px;-webkit-text-stroke:0.3px #000;transform:scaleX(1.06);transform-origin:0 0;">10.0</span>
<span class="t " style="left:570.40px;top:280.75px;font:13.5px/13.5px 'Liberation Sans',sans-serif;color:#000000;letter-spacing:0.146px;-webkit-text-stroke:0.3px #000;transform:scaleX(1.06);transform-origin:0 0;">7.5</span>
<span class="t " style="left:570.40px;top:340.75px;font:13.5px/13.5px 'Liberation Sans',sans-serif;color:#000000;letter-spacing:0.146px;-webkit-text-stroke:0.3px #000;transform:scaleX(1.06);transform-origin:0 0;">5.0</span>
<span class="t " style="left:570.40px;top:400.75px;font:13.5px/13.5px 'Liberation Sans',sans-serif;color:#000000;letter-spacing:0.146px;-webkit-text-stroke:0.3px #000;transform:scaleX(1.06);transform-origin:0 0;">2.5</span>
<span class="t " style="left:551.10px;top:460.75px;font:13.5px/13.5px 'Liberation Sans',sans-serif;color:#000000;letter-spacing:0.871px;-webkit-text-stroke:0.3px #000;transform:scaleX(1.06);transform-origin:0 0;">.0000</span>
<span class="t " style="left:584.50px;top:477.75px;font:13.5px/13.5px 'Liberation Sans',sans-serif;color:#000000;-webkit-text-stroke:0.3px #000;transform:scaleX(1.1);transform-origin:0 0;">10</span>
<span class="t " style="left:603.20px;top:472.75px;font:13.5px/13.5px 'Liberation Sans',sans-serif;color:#000000;-webkit-text-stroke:0.3px #000;transform:scaleX(1.1);transform-origin:0 0;">0</span>
<span class="t " style="left:636.39px;top:477.75px;font:13.5px/13.5px 'Liberation Sans',sans-serif;color:#000000;-webkit-text-stroke:0.3px #000;transform:scaleX(1.1);transform-origin:0 0;">10</span>
<span class="t " style="left:655.09px;top:472.75px;font:13.5px/13.5px 'Liberation Sans',sans-serif;color:#000000;-webkit-text-stroke:0.3px #000;transform:scaleX(1.1);transform-origin:0 0;">1</span>
<span class="t " style="left:688.28px;top:477.75px;font:13.5px/13.5px 'Liberation Sans',sans-serif;color:#000000;-webkit-text-stroke:0.3px #000;transform:scaleX(1.1);transform-origin:0 0;">10</span>
<span class="t " style="left:706.98px;top:472.75px;font:13.5px/13.5px 'Liberation Sans',sans-serif;color:#000000;-webkit-text-stroke:0.3px #000;transform:scaleX(1.1);transform-origin:0 0;">2</span>
<span class="t " style="left:740.17px;top:477.75px;font:13.5px/13.5px 'Liberation Sans',sans-serif;color:#000000;-webkit-text-stroke:0.3px #000;transform:scaleX(1.1);transform-origin:0 0;">10</span>
<span class="t " style="left:758.87px;top:472.75px;font:13.5px/13.5px 'Liberation Sans',sans-serif;color:#000000;-webkit-text-stroke:0.3px #000;transform:scaleX(1.1);transform-origin:0 0;">2</span>
<span class="t " style="left:792.06px;top:477.75px;font:13.5px/13.5px 'Liberation Sans',sans-serif;color:#000000;-webkit-text-stroke:0.3px #000;transform:scaleX(1.1);transform-origin:0 0;">10</span>
<span class="t " style="left:810.76px;top:472.75px;font:13.5px/13.5px 'Liberation Sans',sans-serif;color:#000000;-webkit-text-stroke:0.3px #000;transform:scaleX(1.1);transform-origin:0 0;">4</span>
<span class="t " style="left:843.95px;top:477.75px;font:13.5px/13.5px 'Liberation Sans',sans-serif;color:#000000;-webkit-text-stroke:0.3px #000;transform:scaleX(1.1);transform-origin:0 0;">10</span>
<span class="t " style="left:862.65px;top:472.75px;font:13.5px/13.5px 'Liberation Sans',sans-serif;color:#000000;-webkit-text-stroke:0.3px #000;transform:scaleX(1.1);transform-origin:0 0;">5</span>
<span class="t " style="left:895.84px;top:477.75px;font:13.5px/13.5px 'Liberation Sans',sans-serif;color:#000000;-webkit-text-stroke:0.3px #000;transform:scaleX(1.1);transform-origin:0 0;">10</span>
<span class="t " style="left:914.54px;top:472.75px;font:13.5px/13.5px 'Liberation Sans',sans-serif;color:#000000;-webkit-text-stroke:0.3px #000;transform:scaleX(1.1);transform-origin:0 0;">5</span>
<span class="t " style="left:947.73px;top:477.75px;font:13.5px/13.5px 'Liberation Sans',sans-serif;color:#000000;-webkit-text-stroke:0.3px #000;transform:scaleX(1.1);transform-origin:0 0;">10</span>
<span class="t " style="left:966.43px;top:472.75px;font:13.5px/13.5px 'Liberation Sans',sans-serif;color:#000000;-webkit-text-stroke:0.3px #000;transform:scaleX(1.1);transform-origin:0 0;">7</span>
<span class="t " style="left:999.62px;top:477.75px;font:13.5px/13.5px 'Liberation Sans',sans-serif;color:#000000;-webkit-text-stroke:0.3px #000;transform:scaleX(1.1);transform-origin:0 0;">10</span>
<span class="t " style="left:1018.32px;top:472.75px;font:13.5px/13.5px 'Liberation Sans',sans-serif;color:#000000;-webkit-text-stroke:0.3px #000;transform:scaleX(1.1);transform-origin:0 0;">8</span>
<span class="t " style="left:1051.51px;top:477.75px;font:13.5px/13.5px 'Liberation Sans',sans-serif;color:#000000;-webkit-text-stroke:0.3px #000;transform:scaleX(1.1);transform-origin:0 0;">10</span>
<span class="t " style="left:1070.21px;top:472.75px;font:13.5px/13.5px 'Liberation Sans',sans-serif;color:#000000;-webkit-text-stroke:0.3px #000;transform:scaleX(1.1);transform-origin:0 0;">8</span>
<span class="t " style="left:799.00px;top:495.00px;font:bold 13px/13px 'Liberation Sans',sans-serif;color:#000000;letter-spacing:1.036px;">freq (Hz)</span>
<span class="t" style="left:536.6px;top:319.7px;font:bold 13.5px/13.5px 'Liberation Sans',sans-serif;transform:rotate(-90deg);transform-origin:0 0;letter-spacing:1.154px">Y0 (E-18)</span>
<div style="left:525px;top:517px;width:556px;height:1px;background:#000000;"></div>
<div style="left:535px;top:524px;width:453px;height:1px;background:#6e6e6e;"></div>
<div style="left:535px;top:524px;width:1px;height:3px;background:#6e6e6e;"></div>
<div style="left:536px;top:525px;width:452px;height:2px;background:#d2d2d2;"></div>
<div style="left:991px;top:522px;width:90px;height:5px;background:#ffffff;box-sizing:border-box;border:1px solid #000;border-bottom:none;"></div>
<div style="left:1008px;top:523px;width:7px;height:2px;background:#e03040;"></div>
<div style="left:1025px;top:524px;width:2px;height:3px;background:#000000;"></div>
</div></body></html>
